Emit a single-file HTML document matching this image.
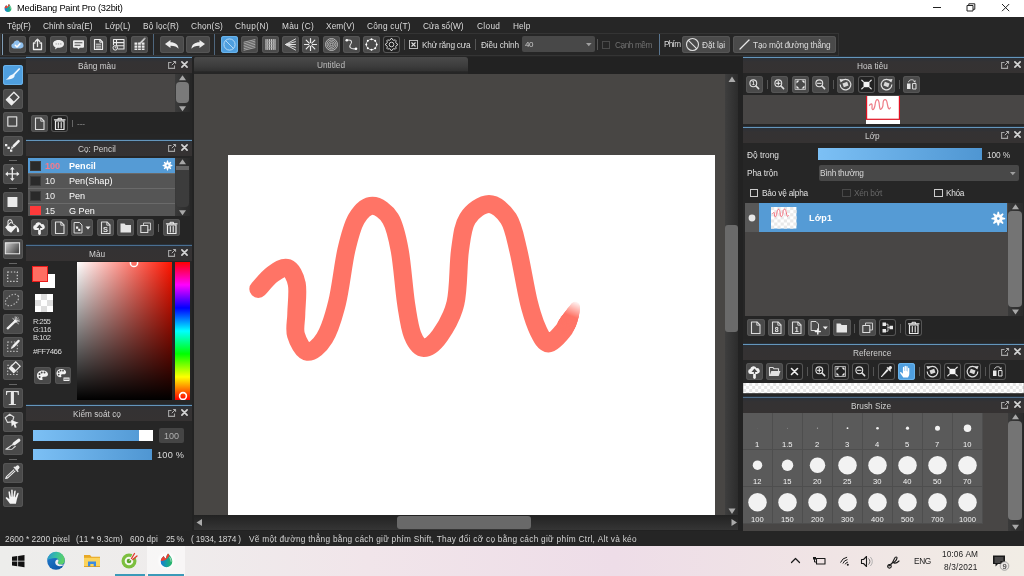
<!DOCTYPE html>
<html><head><meta charset="utf-8"><title>MediBang Paint Pro</title>
<style>
html,body{margin:0;padding:0;}
body{width:1024px;height:576px;position:relative;overflow:hidden;background:#262626;font-family:"Liberation Sans",sans-serif;}
body div,body svg{position:absolute;box-sizing:border-box;}
.t,.g{font-family:"Liberation Sans",sans-serif;will-change:transform;}
svg{overflow:visible;}
</style></head><body>
<div style="left:0px;top:0px;width:1024px;height:17px;background:#ffffff;"></div>
<svg style="left:2.500px;top:3px" width="10" height="10" viewBox="0 0 17 17"><defs><radialGradient id="mgl2" cx=".5" cy=".5" r=".5"><stop offset=".6" stop-color="#fff" stop-opacity=".9"/><stop offset="1" stop-color="#fff" stop-opacity="0"/></radialGradient><linearGradient id="mg2" x1="0" y1="0" x2="1" y2="0"><stop offset="0" stop-color="#1878d8"/><stop offset=".5" stop-color="#16a0a0"/><stop offset="1" stop-color="#2cb860"/></linearGradient></defs><circle cx="8.500" cy="8.500" r="9.500" fill="url(#mgl2)"/><path d="M10 1.500C12.800 4.300 14.300 6.800 14.300 9.500A5.800 5.800 0 0 1 2.700 9.500C2.700 7 4.300 5.200 5.800 4 6.300 5.500 7 6.300 8 6.500 8.200 4.500 8.800 3 10 1.500z" fill="url(#mg2)"/><path d="M10 1.500C8.800 3 8.200 4.500 8 6.500 7 6.300 6.300 5.500 5.800 4 4.300 5.200 3 6.800 2.800 8.800 5.500 9.200 8.800 8.300 11.500 3.300 11 2.600 10.500 2 10 1.500z" fill="#ee4030"/><path d="M11.800 5.500c.9 1.400 1.300 2.600 1.300 3.800" fill="none" stroke="#fff" stroke-opacity=".55" stroke-width="1.100" stroke-linecap="round"/></svg>
<div class="t" style="left:17.3px;top:2.20px;line-height:12px;font-size:9.3px;color:#000;white-space:nowrap;font-kerning:none;letter-spacing:-0.229px;">MediBang Paint Pro (32bit)</div>
<svg style="left:840px;top:0" width="184" height="17" viewBox="0 0 184 17"><path d="M93 7.500h8" stroke="#222" stroke-width="1"/><path d="M127 5.500h6v5.500h-6zM128.800 5.500V3.800h6v5.500h-1.800" fill="none" stroke="#222" stroke-width="1"/><path d="M162 4l7.200 7.200M169.200 4l-7.200 7.200" stroke="#222" stroke-width="1"/></svg>
<div style="left:0px;top:17px;width:1024px;height:16px;background:#262626;"></div>
<div class="t" style="left:7px;top:19.50px;line-height:12px;font-size:8.3px;color:#dcdcdc;white-space:nowrap;font-kerning:none;letter-spacing:-0.233px;">Tệp(F)</div>
<div class="t" style="left:43px;top:19.50px;line-height:12px;font-size:8.3px;color:#dcdcdc;white-space:nowrap;font-kerning:none;letter-spacing:0.010px;">Chỉnh sửa(E)</div>
<div class="t" style="left:105px;top:19.50px;line-height:12px;font-size:8.3px;color:#dcdcdc;white-space:nowrap;font-kerning:none;letter-spacing:0.114px;">Lớp(L)</div>
<div class="t" style="left:142.5px;top:19.50px;line-height:12px;font-size:8.3px;color:#dcdcdc;white-space:nowrap;font-kerning:none;letter-spacing:0.157px;">Bộ lọc(R)</div>
<div class="t" style="left:190.5px;top:19.50px;line-height:12px;font-size:8.3px;color:#dcdcdc;white-space:nowrap;font-kerning:none;letter-spacing:0.156px;">Chọn(S)</div>
<div class="t" style="left:234.5px;top:19.50px;line-height:12px;font-size:8.3px;color:#dcdcdc;white-space:nowrap;font-kerning:none;letter-spacing:0.377px;">Chụp(N)</div>
<div class="t" style="left:281.5px;top:19.50px;line-height:12px;font-size:8.3px;color:#dcdcdc;white-space:nowrap;font-kerning:none;letter-spacing:0.289px;">Màu (C)</div>
<div class="t" style="left:325.5px;top:19.50px;line-height:12px;font-size:8.3px;color:#dcdcdc;white-space:nowrap;font-kerning:none;letter-spacing:0.095px;">Xem(V)</div>
<div class="t" style="left:366.7px;top:19.50px;line-height:12px;font-size:8.3px;color:#dcdcdc;white-space:nowrap;font-kerning:none;letter-spacing:0.229px;">Công cụ(T)</div>
<div class="t" style="left:423px;top:19.50px;line-height:12px;font-size:8.3px;color:#dcdcdc;white-space:nowrap;font-kerning:none;letter-spacing:-0.011px;">Cửa sổ(W)</div>
<div class="t" style="left:476.5px;top:19.50px;line-height:12px;font-size:8.3px;color:#dcdcdc;white-space:nowrap;font-kerning:none;letter-spacing:0.323px;">Cloud</div>
<div class="t" style="left:512.5px;top:19.50px;line-height:12px;font-size:8.3px;color:#dcdcdc;white-space:nowrap;font-kerning:none;letter-spacing:0.107px;">Help</div>
<div style="left:0px;top:33px;width:1024px;height:24px;background:#262626;"></div>
<div style="left:0px;top:33px;width:839px;height:23px;background:transparent;border:1px solid #343434;"></div>
<div style="left:2px;top:34px;width:1px;height:21px;background:#7f9cb5;"></div>
<div style="left:153px;top:34px;width:1px;height:21px;background:#4f677e;"></div>
<div style="left:214px;top:34px;width:1px;height:21px;background:#4f677e;"></div>
<div style="left:659px;top:34px;width:1px;height:21px;background:#5a7690;"></div>
<div style="left:9.0px;top:36px;width:17px;height:17px;background:#4a4a4a;border-radius:3px;box-shadow:inset 0 0 0 1px #555;"></div>
<svg style="left:9.0px;top:36px" width="17" height="17" viewBox="0 0 17 17"><path d="M4.800 12.500a2.600 2.600 0 0 1 -.4 -5.150a3.400 3.400 0 0 1 6.500 -.9a2.900 2.900 0 0 1 1.300 5.700a2 2 0 0 1 -.6 .35z" fill="#8fc0ee" /><path d="M6.300 9.300l1.700 1.700 3-3.300" fill="none" stroke="#ffffff" stroke-width="1.5" stroke-linecap="round" stroke-linejoin="round" /></svg>
<div style="left:29.25px;top:36px;width:17px;height:17px;background:#4a4a4a;border-radius:3px;box-shadow:inset 0 0 0 1px #555;"></div>
<svg style="left:29.25px;top:36px" width="17" height="17" viewBox="0 0 17 17"><path d="M6 7H4.500V13.500H12.500V7H11" fill="none" stroke="#ececec" stroke-width="1.3" stroke-linecap="round" stroke-linejoin="round" /><path d="M8.500 10.500V3.500M6.300 5.500L8.500 3.200 10.700 5.500" fill="none" stroke="#ececec" stroke-width="1.3" stroke-linecap="round" stroke-linejoin="round" /></svg>
<div style="left:49.5px;top:36px;width:17px;height:17px;background:#4a4a4a;border-radius:3px;box-shadow:inset 0 0 0 1px #555;"></div>
<svg style="left:49.5px;top:36px" width="17" height="17" viewBox="0 0 17 17"><path d="M8.500 4C5.200 4 3 5.700 3 7.900c0 1.500 1 2.700 2.500 3.300L5 13.500l2.400 -1.800c.4 0 .7 .1 1.100 .1 3.300 0 5.500 -1.700 5.500 -3.900S11.800 4 8.500 4z" fill="#ececec" /><g fill="#9a9a9a"><circle cx="6.200" cy="7.900" r=".7"/><circle cx="8.500" cy="7.900" r=".7"/><circle cx="10.800" cy="7.900" r=".7"/></g></svg>
<div style="left:69.75px;top:36px;width:17px;height:17px;background:#4a4a4a;border-radius:3px;box-shadow:inset 0 0 0 1px #555;"></div>
<svg style="left:69.75px;top:36px" width="17" height="17" viewBox="0 0 17 17"><path d="M4 4.200h9a1 1 0 0 1 1 1v5.600a1 1 0 0 1 -1 1H9.800L8.500 13.500 7.200 11.800H4a1 1 0 0 1 -1 -1V5.200a1 1 0 0 1 1 -1z" fill="#ececec" /><path d="M5 6.800h7M5 9.200h5" fill="none" stroke="#4a4a4a" stroke-width="1.1" stroke-linecap="round" stroke-linejoin="round" /></svg>
<div style="left:90.0px;top:36px;width:17px;height:17px;background:#4a4a4a;border-radius:3px;box-shadow:inset 0 0 0 1px #555;"></div>
<svg style="left:90.0px;top:36px" width="17" height="17" viewBox="0 0 17 17"><path d="M4.500 3.500H10L12.500 6V13.500H4.500z" fill="none" stroke="#ececec" stroke-width="1.2" stroke-linecap="round" stroke-linejoin="round" /><path d="M9.800 3.700V6.200H12.300" fill="none" stroke="#ececec" stroke-width="1" stroke-linecap="round" stroke-linejoin="round" /><path d="M6.300 8.200h4.400M6.300 10.200h4.400M6.300 12h4.400" fill="none" stroke="#ececec" stroke-width="0.9" stroke-linecap="round" stroke-linejoin="round" /></svg>
<div style="left:110.25px;top:36px;width:17px;height:17px;background:#4a4a4a;border-radius:3px;box-shadow:inset 0 0 0 1px #555;"></div>
<svg style="left:110.25px;top:36px" width="17" height="17" viewBox="0 0 17 17"><path d="M3.500 3.500h10.500v9.500H8.500M3.500 3.500V8.500M3.500 6.600h10.500M6.500 9.800h7.500M6.500 3.500v5" fill="none" stroke="#ececec" stroke-width="1.1" stroke-linecap="round" stroke-linejoin="round" /><circle cx="5.300" cy="11.800" r="2.300" fill="#4a4a4a" stroke="#ececec" stroke-width="1"/><path d="M5.300 10.600v1.300h1" fill="none" stroke="#ececec" stroke-width="0.8" stroke-linecap="round" stroke-linejoin="round" /></svg>
<div style="left:130.5px;top:36px;width:17px;height:17px;background:#4a4a4a;border-radius:3px;box-shadow:inset 0 0 0 1px #555;"></div>
<svg style="left:130.5px;top:36px" width="17" height="17" viewBox="0 0 17 17"><path d="M3.500 6.500h2.800v2.200H3.500zM7.100 6.500h2.800v2.200H7.100zM10.700 6.500h2.800v2.200h-2.800zM3.500 9.500h2.800v2.200H3.500zM7.100 9.500h2.800v2.200H7.100zM10.700 9.500h2.800v2.200h-2.800zM3.500 12.500h2.800v1.500H3.500zM7.100 12.500h2.800v1.500H7.100zM10.700 12.500h2.800v1.500h-2.800z" fill="#ececec" /><path d="M9.500 6.800L13 3.300" fill="none" stroke="#cfcfcf" stroke-width="1.7" stroke-linecap="round" stroke-linejoin="round" /><path d="M13.300 3l.6 -.6" fill="none" stroke="#aaa" stroke-width="1.6" stroke-linecap="round" stroke-linejoin="round" /></svg>
<div style="left:160px;top:36px;width:24px;height:17px;background:#4a4a4a;border-radius:3px;box-shadow:inset 0 0 0 1px #555;"></div>
<svg style="left:160px;top:36px" width="24" height="17" viewBox="0 0 24 17"><path d="M5 8L10.500 4V6.300C15 6.300 18.500 8.500 18.500 12.800 17 10.500 14.500 9.700 10.500 9.700V12z" fill="#ececec" /></svg>
<div style="left:186px;top:36px;width:24px;height:17px;background:#4a4a4a;border-radius:3px;box-shadow:inset 0 0 0 1px #555;"></div>
<svg style="left:186px;top:36px" width="24" height="17" viewBox="0 0 24 17"><path d="M19 8L13.500 4V6.300C9 6.300 5.500 8.500 5.500 12.800 7 10.500 9.500 9.700 13.500 9.700V12z" fill="#ececec" /></svg>
<div style="left:221.0px;top:36px;width:17px;height:17px;background:#4f9fdf;border-radius:3px;box-shadow:inset 0 0 0 1px #6ab3ea;"></div>
<svg style="left:221.0px;top:36px" width="17" height="17" viewBox="0 0 17 17"><circle cx="8.500" cy="8.500" r="5.600" fill="none" stroke="#b4d8f6" stroke-width="1"/><path d="M4.700 4.700l7.600 7.600" fill="none" stroke="#b4d8f6" stroke-width="1" stroke-linecap="round" stroke-linejoin="round" /></svg>
<div style="left:241.3px;top:36px;width:17px;height:17px;background:#4a4a4a;border-radius:3px;box-shadow:inset 0 0 0 1px #555;"></div>
<svg style="left:241.3px;top:36px" width="17" height="17" viewBox="0 0 17 17"><path d="M3 6.200L14 3.600M3 7.800L14 5.200M3 9.400L14 6.800M3 11L14 8.400M3 12.600L14 10M3 14.200L14 11.600" fill="none" stroke="#bdbdbd" stroke-width="0.8" stroke-linecap="round" stroke-linejoin="round" /></svg>
<div style="left:261.6px;top:36px;width:17px;height:17px;background:#4a4a4a;border-radius:3px;box-shadow:inset 0 0 0 1px #555;"></div>
<svg style="left:261.6px;top:36px" width="17" height="17" viewBox="0 0 17 17"><path d="M4 3.500v10M5.800 3.500v10M7.600 3.500v10M9.400 3.500v10M11.200 3.500v10M13 3.500v10" fill="none" stroke="#d8d8d8" stroke-width="1.0" stroke-linecap="round" stroke-linejoin="round" /><path d="M3.500 5.500h10M3.500 8.500h10M3.500 11.500h10" fill="none" stroke="#9a9a9a" stroke-width="0.6" stroke-linecap="round" stroke-linejoin="round" /></svg>
<div style="left:281.9px;top:36px;width:17px;height:17px;background:#4a4a4a;border-radius:3px;box-shadow:inset 0 0 0 1px #555;"></div>
<svg style="left:281.9px;top:36px" width="17" height="17" viewBox="0 0 17 17"><path d="M3.500 8.500L13.500 3M3.500 8.500L13.500 14M3.500 8.500L13.500 5.700M3.500 8.500L13.500 11.300M3.500 8.500H13.500" fill="none" stroke="#e0e0e0" stroke-width="1.0" stroke-linecap="round" stroke-linejoin="round" /></svg>
<div style="left:302.2px;top:36px;width:17px;height:17px;background:#4a4a4a;border-radius:3px;box-shadow:inset 0 0 0 1px #555;"></div>
<svg style="left:302.2px;top:36px" width="17" height="17" viewBox="0 0 17 17"><path d="M8.500 2.500v12M2.500 8.500h12M4.200 4.200l8.600 8.600M12.800 4.200l-8.600 8.600" fill="none" stroke="#ececec" stroke-width="1.2" stroke-linecap="round" stroke-linejoin="round" /><circle cx="8.500" cy="8.500" r="1.400" fill="#4a4a4a"/></svg>
<div style="left:322.5px;top:36px;width:17px;height:17px;background:#4a4a4a;border-radius:3px;box-shadow:inset 0 0 0 1px #555;"></div>
<svg style="left:322.5px;top:36px" width="17" height="17" viewBox="0 0 17 17"><circle cx="8.500" cy="8.500" r="1.3" fill="none" stroke="#cfcfcf" stroke-width="0.8"/><circle cx="8.500" cy="8.500" r="2.9" fill="none" stroke="#cfcfcf" stroke-width="0.8"/><circle cx="8.500" cy="8.500" r="4.5" fill="none" stroke="#cfcfcf" stroke-width="0.8"/><circle cx="8.500" cy="8.500" r="6" fill="none" stroke="#cfcfcf" stroke-width="0.8"/></svg>
<div style="left:342.8px;top:36px;width:17px;height:17px;background:#4a4a4a;border-radius:3px;box-shadow:inset 0 0 0 1px #555;"></div>
<svg style="left:342.8px;top:36px" width="17" height="17" viewBox="0 0 17 17"><path d="M3.800 4.200C9 3.500 9.500 6 7.500 8.500 5.500 11 8 13.500 13 12.700" fill="none" stroke="#dcdcdc" stroke-width="1.1" stroke-linecap="round" stroke-linejoin="round" /><circle cx="3.800" cy="4.200" r="1.300" fill="#fff"/><circle cx="13" cy="12.700" r="1.300" fill="#fff"/></svg>
<div style="left:363.1px;top:36px;width:17px;height:17px;background:#4a4a4a;border-radius:3px;box-shadow:inset 0 0 0 1px #555;"></div>
<svg style="left:363.1px;top:36px" width="17" height="17" viewBox="0 0 17 17"><circle cx="8.500" cy="8.500" r="5.200" fill="none" stroke="#d4d4d4" stroke-width="0.900"/><circle cx="13.70" cy="8.50" r="1" fill="#fff"/><circle cx="12.18" cy="12.18" r="1" fill="#fff"/><circle cx="8.50" cy="13.70" r="1" fill="#fff"/><circle cx="4.82" cy="12.18" r="1" fill="#fff"/><circle cx="3.30" cy="8.50" r="1" fill="#fff"/><circle cx="4.82" cy="4.82" r="1" fill="#fff"/><circle cx="8.50" cy="3.30" r="1" fill="#fff"/><circle cx="12.18" cy="4.82" r="1" fill="#fff"/></svg>
<div style="left:383.4px;top:36px;width:17px;height:17px;background:#222222;border-radius:3px;box-shadow:inset 0 0 0 1px #555;"></div>
<svg style="left:383.4px;top:36px" width="17" height="17" viewBox="0 0 17 17"><path d="M14.47 7.91L14.47 9.09L13.00 9.86L12.65 10.72L13.14 12.31L12.31 13.14L10.72 12.65L9.86 13.00L9.09 14.47L7.91 14.47L7.14 13.00L6.28 12.65L4.69 13.14L3.86 12.31L4.35 10.72L4.00 9.86L2.53 9.09L2.53 7.91L4.00 7.14L4.35 6.28L3.86 4.69L4.69 3.86L6.28 4.35L7.14 4.00L7.91 2.53L9.09 2.53L9.86 4.00L10.72 4.35L12.31 3.86L13.14 4.69L12.65 6.28L13.00 7.14z" fill="none" stroke="#d0d0d0" stroke-width="1" stroke-linejoin="round"/><circle cx="8.500" cy="8.500" r="2.300" fill="none" stroke="#d0d0d0" stroke-width="1"/></svg>
<div style="left:404px;top:39px;width:1px;height:11px;background:#555;"></div>
<div style="left:409px;top:40px;width:9px;height:9px;background:#262626;border:1px solid #bbb;"></div>
<svg style="left:409px;top:40px" width="9" height="9"><path d="M2.5 2.5l4 4M6.5 2.5l-4 4" stroke="#ddd" stroke-width="1.1"/></svg>
<div class="t" style="left:421.5px;top:39.00px;line-height:12px;font-size:8.3px;color:#dcdcdc;white-space:nowrap;font-kerning:none;letter-spacing:-0.230px;">Khử răng cưa</div>
<div style="left:475px;top:39px;width:1px;height:11px;background:#555;"></div>
<div class="t" style="left:481px;top:39.00px;line-height:12px;font-size:8.3px;color:#dcdcdc;white-space:nowrap;font-kerning:none;letter-spacing:-0.122px;">Điều chỉnh</div>
<div style="left:522px;top:36px;width:73px;height:16px;background:#484848;border-radius:2px;"></div>
<div class="t" style="left:525px;top:38.50px;line-height:12px;font-size:8.0px;color:#ccc;white-space:nowrap;font-kerning:none;letter-spacing:-0.450px;">40</div>
<svg style="left:585.500px;top:42.500px" width="6" height="4"><path d="M0 0h5.600l-2.800 3.200z" fill="#a0a0a0"/></svg>
<div style="left:597px;top:39px;width:1px;height:11px;background:#555;"></div>
<div style="left:602px;top:41px;width:8px;height:8px;background:transparent;border:1px solid #4a4a4a;"></div>
<div class="t" style="left:615px;top:39.00px;line-height:12px;font-size:8.3px;color:#707070;white-space:nowrap;font-kerning:none;letter-spacing:-0.449px;">Cạnh mềm</div>
<div class="t" style="left:663.7px;top:39.00px;line-height:12px;font-size:8.2px;color:#dcdcdc;white-space:nowrap;font-kerning:none;letter-spacing:-0.710px;">Phím</div>
<div style="left:682px;top:36px;width:48px;height:17px;background:#4a4a4a;border-radius:3px;box-shadow:inset 0 0 0 1px #555;"></div>
<svg style="left:685px;top:37px" width="15" height="15" viewBox="0 0 15 15"><circle cx="7.500" cy="7.500" r="6" fill="none" stroke="#e0e0e0" stroke-width="1.1"/><path d="M3.400 3.400l8.200 8.200" fill="none" stroke="#e0e0e0" stroke-width="1.1" stroke-linecap="round" stroke-linejoin="round" /></svg>
<div class="t" style="left:701.5px;top:39.00px;line-height:12px;font-size:8.3px;color:#dcdcdc;white-space:nowrap;font-kerning:none;letter-spacing:-0.075px;">Đặt lại</div>
<div style="left:733px;top:36px;width:103px;height:17px;background:#4a4a4a;border-radius:3px;box-shadow:inset 0 0 0 1px #555;"></div>
<svg style="left:738px;top:38px" width="13" height="13" viewBox="0 0 13 13"><path d="M2 11L11 2" fill="none" stroke="#e8e8e8" stroke-width="1.3" stroke-linecap="round" stroke-linejoin="round" /></svg>
<div class="t" style="left:752.5px;top:39.00px;line-height:12px;font-size:8.3px;color:#dcdcdc;white-space:nowrap;font-kerning:none;letter-spacing:-0.167px;">Tạo một đường thẳng</div>
<div style="left:0px;top:57px;width:26px;height:474px;background:#262626;"></div>
<div style="left:0px;top:57px;width:26px;height:2px;background:#35424f;"></div>
<div style="left:25.5px;top:59px;width:1px;height:471px;background:#303030;"></div>
<div style="left:3.2px;top:65px;width:19.5px;height:20px;background:#4f9fdf;border-radius:3px;box-shadow:inset 0 0 0 1px #6ab3ea;"></div>
<svg style="left:3.2px;top:65px" width="19.5" height="20" viewBox="0 0 19.5 20"><path d="M16.200 4L10.300 10.100" fill="none" stroke="#eef7ff" stroke-width="1.7" stroke-linecap="round" stroke-linejoin="round" /><path d="M10.700 9.500L11.700 10.600C11.500 12.600 9.600 14 6.900 14.300 5.500 14.500 4 14.500 2.800 14.700 4.800 13.600 5.500 12.700 6.100 11.600 6.900 10.200 8.900 9.100 10.700 9.500z" fill="#eef7ff" /></svg>
<div style="left:3.2px;top:88.5px;width:19.5px;height:20px;background:#4a4a4a;border-radius:3px;box-shadow:inset 0 0 0 1px #555;"></div>
<svg style="left:3.2px;top:88.5px" width="19.5" height="20" viewBox="0 0 19.5 20"><g transform="translate(9.700,9.500) rotate(-45)"><path d="M-5.300 -3.600h10.600v7.200h-10.600z" fill="none" stroke="#ececec" stroke-width="1.3" stroke-linecap="round" stroke-linejoin="round" /><path d="M-5.300 -3.600h4v7.200h-4z" fill="#ececec" /></g></svg>
<div style="left:3.2px;top:112px;width:19.5px;height:20px;background:#4a4a4a;border-radius:3px;box-shadow:inset 0 0 0 1px #555;"></div>
<svg style="left:3.2px;top:112px" width="19.5" height="20" viewBox="0 0 19.5 20"><path d="M4.800 4.900h8.900v9.200H4.800z" fill="none" stroke="#d4d4d4" stroke-width="1.3" stroke-linecap="round" stroke-linejoin="round" /></svg>
<div style="left:3.2px;top:135.5px;width:19.5px;height:20px;background:#4a4a4a;border-radius:3px;box-shadow:inset 0 0 0 1px #555;"></div>
<svg style="left:3.2px;top:135.5px" width="19.5" height="20" viewBox="0 0 19.5 20"><path d="M15.600 5.200L10.800 10" fill="none" stroke="#efefef" stroke-width="2.5" stroke-linecap="round" stroke-linejoin="round" /><path d="M8.800 10l2 2 -2.900 .9z" fill="#efefef" /><path d="M2 8h2.300v2.300H2zM4.500 10.700h2.300v2.300H4.500zM7 13.400h2.300v2.300H7z" fill="#efefef" /></svg>
<div style="left:3.2px;top:163.5px;width:19.5px;height:20px;background:#4a4a4a;border-radius:3px;box-shadow:inset 0 0 0 1px #555;"></div>
<svg style="left:3.2px;top:163.5px" width="19.5" height="20" viewBox="0 0 19.5 20"><path d="M9.300 4.500v11M3.800 9.900h11" fill="none" stroke="#ececec" stroke-width="1.3" stroke-linecap="round" stroke-linejoin="round" /><path d="M9.300 2.800l2.300 2.700H7zM9.300 17l2.300 -2.700H7zM2.200 9.900l2.700 -2.300v4.600zM16.400 9.900l-2.700 -2.300v4.600z" fill="#ececec" /></svg>
<div style="left:3.2px;top:192px;width:19.5px;height:20px;background:#4a4a4a;border-radius:3px;box-shadow:inset 0 0 0 1px #555;"></div>
<svg style="left:3.2px;top:192px" width="19.5" height="20" viewBox="0 0 19.5 20"><path d="M4.500 5h9.900v10H4.500z" fill="#ebebeb" /></svg>
<div style="left:3.2px;top:215.5px;width:19.5px;height:20px;background:#4a4a4a;border-radius:3px;box-shadow:inset 0 0 0 1px #555;"></div>
<svg style="left:3.2px;top:215.5px" width="19.5" height="20" viewBox="0 0 19.5 20"><path d="M2.200 11.300L7.600 5.800 14 10.300 8.100 16.700 4.900 14.800z" fill="#f2f2f2" /><path d="M5 9V5.500a2 2 0 0 1 3.800 -.6L9.500 7" fill="none" stroke="#e8e8e8" stroke-width="1.1" stroke-linecap="round" stroke-linejoin="round" /><path d="M13.800 10c1.600 1.400 2.600 3.600 2.400 5.600a1.200 1.200 0 0 1 -2.300 -.3c.2 -1.800 0 -3.600 -.9 -4.600z" fill="#f2f2f2" /><path d="M5.500 9.200L8 6.800 11.800 9.400 9 10.400z" fill="#4a4a4a" /></svg>
<div style="left:3.2px;top:239px;width:19.5px;height:20px;background:#4a4a4a;border-radius:3px;box-shadow:inset 0 0 0 1px #555;"></div>
<svg style="left:3.2px;top:239px" width="19.5" height="20" viewBox="0 0 19.5 20"><defs><linearGradient id="tg" x1="0" x2="1" y1="0" y2="0.600"><stop offset="0" stop-color="#cfcfcf"/><stop offset="1" stop-color="#4c4c4c"/></linearGradient></defs><rect x="2.300" y="3.800" width="14.300" height="11" fill="url(#tg)" stroke="#ececec" stroke-width="1"/></svg>
<div style="left:3.2px;top:267px;width:19.5px;height:20px;background:#4a4a4a;border-radius:3px;box-shadow:inset 0 0 0 1px #555;"></div>
<svg style="left:3.2px;top:267px" width="19.5" height="20" viewBox="0 0 19.5 20"><rect x="4.700" y="5" width="9.600" height="9.400" fill="none" stroke="#cdcdcd" stroke-width="1.200" stroke-dasharray="1.400 1.700"/></svg>
<div style="left:3.2px;top:290px;width:19.5px;height:20px;background:#4a4a4a;border-radius:3px;box-shadow:inset 0 0 0 1px #555;"></div>
<svg style="left:3.2px;top:290px" width="19.5" height="20" viewBox="0 0 19.5 20"><ellipse cx="9" cy="10" rx="7.400" ry="4.700" transform="rotate(-35 9 10)" fill="none" stroke="#b4b4b4" stroke-width="1.200" stroke-dasharray="1.500 1.600"/></svg>
<div style="left:3.2px;top:313.5px;width:19.5px;height:20px;background:#4a4a4a;border-radius:3px;box-shadow:inset 0 0 0 1px #555;"></div>
<svg style="left:3.2px;top:313.5px" width="19.5" height="20" viewBox="0 0 19.5 20"><path d="M4.700 14.300L11.200 8.200" fill="none" stroke="#f0f0f0" stroke-width="2.3" stroke-linecap="round" stroke-linejoin="round" /><path d="M12.200 7.200L15.500 4M12.200 7.200V2.800M12.200 7.200H16.500M12.200 7.200L9.800 4.200M12.200 7.200l3.300 2.600M12.200 7.200L13.800 3M12.200 7.200l4 -1.200" fill="none" stroke="#dcdcdc" stroke-width="0.8" stroke-linecap="round" stroke-linejoin="round" /><circle cx="12.200" cy="7.200" r="1.500" fill="#f4f4f4"/></svg>
<div style="left:3.2px;top:336.5px;width:19.5px;height:20px;background:#4a4a4a;border-radius:3px;box-shadow:inset 0 0 0 1px #555;"></div>
<svg style="left:3.2px;top:336.5px" width="19.5" height="20" viewBox="0 0 19.5 20"><rect x="4.700" y="5" width="9.600" height="9.400" fill="none" stroke="#bdbdbd" stroke-width="1.100" stroke-dasharray="1.400 1.700"/><path d="M15.500 4L10.600 9.200" fill="none" stroke="#f0f0f0" stroke-width="2.5" stroke-linecap="round" stroke-linejoin="round" /><path d="M8.900 9l1.900 1.800 -3 1.200z" fill="#f0f0f0" /></svg>
<div style="left:3.2px;top:360px;width:19.5px;height:20px;background:#4a4a4a;border-radius:3px;box-shadow:inset 0 0 0 1px #555;"></div>
<svg style="left:3.2px;top:360px" width="19.5" height="20" viewBox="0 0 19.5 20"><rect x="4.700" y="5.300" width="9.600" height="9.200" fill="none" stroke="#bdbdbd" stroke-width="1.100" stroke-dasharray="1.400 1.700"/><g transform="translate(11.700,7.300) rotate(-45)"><path d="M-4.600 -3.100h9.200v6.200h-9.200z" fill="#4a4a4a" stroke="#ececec" stroke-width="1.200"/><path d="M-4.600 -3.100h3.400v6.200h-3.400z" fill="#ececec"/></g></svg>
<div style="left:3.2px;top:388px;width:19.5px;height:20px;background:#4a4a4a;border-radius:3px;box-shadow:inset 0 0 0 1px #555;"></div>
<svg class="g" style="left:3.2px;top:388px" width="19.5" height="20" viewBox="0 0 19.5 20"><text x="9.500" y="16.700" text-anchor="middle" font-family="Liberation Serif,serif" font-weight="bold" font-size="20" fill="#e8e8e8">T</text></svg>
<div style="left:3.2px;top:411.5px;width:19.5px;height:20px;background:#4a4a4a;border-radius:3px;box-shadow:inset 0 0 0 1px #555;"></div>
<svg style="left:3.2px;top:411.5px" width="19.5" height="20" viewBox="0 0 19.5 20"><path d="M6.700 2.200L10.800 4.900 9.400 9.900 4.500 10.400 2.200 5.800z" fill="none" stroke="#dcdcdc" stroke-width="1.2" stroke-linecap="round" stroke-linejoin="round" /><path d="M8.100 8.100L15.600 10.700 12.500 11.900 13.600 15.600 11.700 15.800 10.600 12.600 8.600 14.600z" fill="#f0f0f0" /></svg>
<div style="left:3.2px;top:435px;width:19.5px;height:20px;background:#4a4a4a;border-radius:3px;box-shadow:inset 0 0 0 1px #555;"></div>
<svg style="left:3.2px;top:435px" width="19.5" height="20" viewBox="0 0 19.5 20"><path d="M15.800 5.200L11.200 8.700" fill="none" stroke="#f0f0f0" stroke-width="3.2" stroke-linecap="round" stroke-linejoin="round" /><path d="M10.300 9.300L2.900 14.200 8.700 14.300 12.300 11.400" fill="none" stroke="#e4e4e4" stroke-width="1.1" stroke-linecap="round" stroke-linejoin="round" /><path d="M8.500 10.600l1.800 2.400 -3.500 1z" fill="#3c3c3c" /></svg>
<div style="left:3.2px;top:463px;width:19.5px;height:20px;background:#4a4a4a;border-radius:3px;box-shadow:inset 0 0 0 1px #555;"></div>
<svg style="left:3.2px;top:463px" width="19.5" height="20" viewBox="0 0 19.5 20"><path d="M10.800 6.900L3.500 13.600 2.700 15.500 4.700 14.900 12 8.100" fill="none" stroke="#ececec" stroke-width="1.1" stroke-linecap="round" stroke-linejoin="round" /><path d="M10.400 4.300L14.700 9.200 15.700 8.300 14.600 7 15.900 5.800A1.900 1.900 0 0 0 13.300 3L12 4.100 11.300 3.400z" fill="#ececec" /></svg>
<div style="left:3.2px;top:486.5px;width:19.5px;height:20px;background:#4a4a4a;border-radius:3px;box-shadow:inset 0 0 0 1px #555;"></div>
<svg style="left:3.2px;top:486.5px" width="19.5" height="20" viewBox="0 0 19.5 20"><path d="M7 16.700C5.600 14.800 4.300 13 2.900 11.400 2.200 10.500 3.300 9.700 4.200 10.400L6.400 12.200 5.500 5.200C5.400 4.100 6.700 3.900 6.900 5L7.900 9.800H8.300L8.200 3.300C8.200 2.100 9.700 2.100 9.700 3.300L9.900 9.700H10.300L11.300 4.100C11.500 3 12.900 3.200 12.700 4.400L12 10.200H12.400L14.200 6.400C14.700 5.400 15.900 5.900 15.500 7L13.900 12.300C13.500 14 13.200 15.500 12.900 16.700z" fill="#f4f4f4" /></svg>
<div style="left:9px;top:159.5px;width:8px;height:1px;background:#666;"></div>
<div style="left:9px;top:187.5px;width:8px;height:1px;background:#666;"></div>
<div style="left:9px;top:262.5px;width:8px;height:1px;background:#666;"></div>
<div style="left:9px;top:383.5px;width:8px;height:1px;background:#666;"></div>
<div style="left:9px;top:459px;width:8px;height:1px;background:#666;"></div>
<div style="left:26px;top:57px;width:166.5px;height:83px;background:#262626;"></div>
<div style="left:26px;top:58px;width:166.5px;height:15px;background:linear-gradient(#2c3138 0,#343233 4px,#353232 100%);"></div>
<div style="left:26px;top:56px;width:166.5px;height:1px;background:#28323c;"></div>
<div style="left:26px;top:57px;width:166.5px;height:1px;background:#6496bc;"></div>
<div class="t" style="left:78.4318359375px;top:59.50px;line-height:12px;font-size:8.3px;color:#d0d0d0;white-space:nowrap;font-kerning:none;">Bảng màu</div>
<svg style="left:180.9px;top:61.099999999999994px" width="7" height="7"><path d="M.9 .9l5.200 5.200M6.100 .9l-5.200 5.200" stroke="#d4d4d4" stroke-width="1.700" stroke-linecap="round"/></svg>
<svg style="left:167.9px;top:60.599999999999994px" width="9" height="9"><path d="M3.500 1.500H.6V7.400H6.500V4.500" fill="none" stroke="#a4a4a4" stroke-width="1.100"/><path d="M3.800 4.200L7.500 .5M5.200 .5h2.400V2.800" fill="none" stroke="#b4b4b4" stroke-width="1"/></svg>
<div style="left:28px;top:73.5px;width:147px;height:38.5px;background:#484645;"></div>
<div style="left:175px;top:73.5px;width:15px;height:38.5px;background:linear-gradient(90deg,#3a3a3a,#2a2a2a);"></div>
<svg style="left:175px;top:73.5px" width="15" height="38.5"><path d="M4.0 6.2h7l-3.500 -5z" fill="#a8a8a8"/><path d="M4.0 32.3h7l-3.500 5z" fill="#a8a8a8"/></svg>
<div style="left:175.5px;top:82.2px;width:13.5px;height:21.299999999999997px;background:#7a7a7a;border-radius:4px;"></div>
<div style="left:28px;top:112px;width:164px;height:22px;background:#252525;"></div>
<div style="left:31px;top:115px;width:17px;height:17px;background:#4a4a4a;border-radius:3px;box-shadow:inset 0 0 0 1px #555;"></div>
<svg style="left:31px;top:115px" width="17" height="17" viewBox="0 0 17 17"><path d="M4.500 3h5.500L13 6v8.500H4.500z" fill="none" stroke="#dcdcdc" stroke-width="1.1" stroke-linecap="round" stroke-linejoin="round" /><path d="M9.800 3.200V6.200H12.800" fill="none" stroke="#dcdcdc" stroke-width="0.9" stroke-linecap="round" stroke-linejoin="round" /></svg>
<div style="left:51px;top:115px;width:17px;height:17px;background:#222222;border-radius:3px;box-shadow:inset 0 0 0 1px #555;"></div>
<svg style="left:51px;top:115px" width="17" height="17" viewBox="0 0 17 17"><path d="M4.500 6h8.500v8.500H4.500z" fill="none" stroke="#ececec" stroke-width="1.2" stroke-linecap="round" stroke-linejoin="round" /><path d="M7.300 7.500v5.500M10.200 7.500v5.500" fill="none" stroke="#ececec" stroke-width="1.1" stroke-linecap="round" stroke-linejoin="round" /><path d="M3.500 4.800h10.500" fill="none" stroke="#ececec" stroke-width="1.3" stroke-linecap="round" stroke-linejoin="round" /><path d="M7 4.500V3.300h3.500v1.200" fill="none" stroke="#ececec" stroke-width="1" stroke-linecap="round" stroke-linejoin="round" /></svg>
<div style="left:72px;top:120px;width:1px;height:7px;background:#666;"></div>
<div class="t" style="left:77px;top:117.50px;line-height:12px;font-size:8.3px;color:#888;white-space:nowrap;font-kerning:none;letter-spacing:-0.097px;">---</div>
<div style="left:26px;top:140px;width:166.5px;height:105px;background:#262626;"></div>
<div style="left:26px;top:141px;width:166.5px;height:15px;background:linear-gradient(#2c3138 0,#343233 4px,#353232 100%);"></div>
<div style="left:26px;top:139px;width:166.5px;height:1px;background:#28323c;"></div>
<div style="left:26px;top:140px;width:166.5px;height:1px;background:#6496bc;"></div>
<div class="t" style="left:78.43588867187499px;top:142.50px;line-height:12px;font-size:8.3px;color:#d0d0d0;white-space:nowrap;font-kerning:none;">Cọ: Pencil</div>
<svg style="left:180.9px;top:144.1px" width="7" height="7"><path d="M.9 .9l5.200 5.200M6.100 .9l-5.200 5.200" stroke="#d4d4d4" stroke-width="1.700" stroke-linecap="round"/></svg>
<svg style="left:167.9px;top:143.6px" width="9" height="9"><path d="M3.500 1.500H.6V7.400H6.500V4.500" fill="none" stroke="#a4a4a4" stroke-width="1.100"/><path d="M3.800 4.200L7.500 .5M5.200 .5h2.400V2.800" fill="none" stroke="#b4b4b4" stroke-width="1"/></svg>
<div style="left:28px;top:157.5px;width:147px;height:58.5px;background:#555;"></div>
<div style="left:28px;top:157.5px;width:147px;height:15px;background:#559bd5;"></div>
<div style="left:28px;top:172.5px;width:147px;height:1px;background:#6a6a6a;"></div>
<div style="left:28px;top:187.5px;width:147px;height:1px;background:#6a6a6a;"></div>
<div style="left:28px;top:202.5px;width:147px;height:1px;background:#6a6a6a;"></div>
<div style="left:30px;top:160.5px;width:10.5px;height:10px;background:#2a2a2a;border:1px solid #3c3c3c;"></div>
<div class="t" style="left:44.5px;top:159.50px;line-height:12px;font-size:9.1px;color:#f47a8c;white-space:nowrap;font-kerning:none;font-weight:bold;">100</div>
<div class="t" style="left:68.5px;top:159.50px;line-height:12px;font-size:9.1px;color:#ffffff;white-space:nowrap;font-kerning:none;font-weight:bold;">Pencil</div>
<div style="left:30px;top:175.5px;width:10.5px;height:10px;background:#2a2a2a;border:1px solid #3c3c3c;"></div>
<div class="t" style="left:44.5px;top:174.50px;line-height:12px;font-size:9.1px;color:#f0f0f0;white-space:nowrap;font-kerning:none;">10</div>
<div class="t" style="left:68.5px;top:174.50px;line-height:12px;font-size:9.1px;color:#ffffff;white-space:nowrap;font-kerning:none;">Pen(Shap)</div>
<div style="left:30px;top:190.5px;width:10.5px;height:10px;background:#2a2a2a;border:1px solid #3c3c3c;"></div>
<div class="t" style="left:44.5px;top:189.50px;line-height:12px;font-size:9.1px;color:#f0f0f0;white-space:nowrap;font-kerning:none;">10</div>
<div class="t" style="left:68.5px;top:189.50px;line-height:12px;font-size:9.1px;color:#ffffff;white-space:nowrap;font-kerning:none;">Pen</div>
<div style="left:30px;top:205.5px;width:10.5px;height:9px;background:#ff3a3a;"></div>
<div class="t" style="left:44.5px;top:204.50px;line-height:12px;font-size:9.1px;color:#f0f0f0;white-space:nowrap;font-kerning:none;">15</div>
<div class="t" style="left:68.5px;top:204.50px;line-height:12px;font-size:9.1px;color:#ffffff;white-space:nowrap;font-kerning:none;">G Pen</div>
<svg style="left:161.700px;top:160.300px" width="11" height="11"><path d="M10.38 5.02L10.38 5.98L8.56 6.43L8.32 7.01L9.29 8.61L8.61 9.29L7.01 8.32L6.43 8.56L5.98 10.38L5.02 10.38L4.57 8.56L3.99 8.32L2.39 9.29L1.71 8.61L2.68 7.01L2.44 6.43L0.62 5.98L0.62 5.02L2.44 4.57L2.68 3.99L1.71 2.39L2.39 1.71L3.99 2.68L4.57 2.44L5.02 0.62L5.98 0.62L6.43 2.44L7.01 2.68L8.61 1.71L9.29 2.39L8.32 3.99L8.56 4.57z" fill="#fff"/><circle cx="5.5" cy="5.5" r="1" fill="#559bd5"/></svg>
<div style="left:175px;top:157.5px;width:15px;height:58.5px;background:linear-gradient(90deg,#3a3a3a,#2a2a2a);"></div>
<svg style="left:175px;top:157.5px" width="15" height="58.5"><path d="M4.0 6.2h7l-3.500 -5z" fill="#a8a8a8"/><path d="M4.0 52.3h7l-3.500 5z" fill="#a8a8a8"/></svg>
<div style="left:175.5px;top:166px;width:13.5px;height:41px;background:#3c3c3c;border-radius:4px;"></div>
<div style="left:176px;top:166px;width:13px;height:4px;background:#666;"></div>
<div style="left:28px;top:216px;width:164px;height:24px;background:#252525;"></div>
<div style="left:31px;top:219px;width:17px;height:17px;background:#4a4a4a;border-radius:3px;box-shadow:inset 0 0 0 1px #555;"></div>
<svg style="left:31px;top:219px" width="17" height="17" viewBox="0 0 17 17"><path d="M4.500 11a2.500 2.500 0 0 1 -.3 -4.950a3.300 3.300 0 0 1 6.300 -.9a2.800 2.800 0 0 1 1.400 5.400a2 2 0 0 1 -.9 .45z" fill="#f0f0f0" /><path d="M8.500 14.500V8.500" fill="none" stroke="#f0f0f0" stroke-width="2.4" stroke-linecap="round" stroke-linejoin="round" /><path d="M8.500 14V8" fill="none" stroke="#4a4a4a" stroke-width="1.2" stroke-linecap="round" stroke-linejoin="round" /><path d="M8.500 5.500l3 3.500h-6z" fill="#4a4a4a" /><path d="M8.500 14.600v-2.800" fill="none" stroke="#f0f0f0" stroke-width="2.2" stroke-linecap="round" stroke-linejoin="round" /></svg>
<div style="left:51px;top:219px;width:17px;height:17px;background:#4a4a4a;border-radius:3px;box-shadow:inset 0 0 0 1px #555;"></div>
<svg style="left:51px;top:219px" width="17" height="17" viewBox="0 0 17 17"><path d="M4.500 3h5.500L13 6v8.500H4.500z" fill="none" stroke="#dcdcdc" stroke-width="1.1" stroke-linecap="round" stroke-linejoin="round" /><path d="M9.800 3.200V6.200H12.800" fill="none" stroke="#dcdcdc" stroke-width="0.9" stroke-linecap="round" stroke-linejoin="round" /></svg>
<div style="left:71px;top:219px;width:22px;height:17px;background:#4a4a4a;border-radius:3px;box-shadow:inset 0 0 0 1px #555;"></div>
<svg style="left:71px;top:219px" width="22" height="17" viewBox="0 0 22 17"><path d="M3.500 3.500h5L11 6v8H3.500z" fill="none" stroke="#d8d8d8" stroke-width="1" stroke-linecap="round" stroke-linejoin="round" /><path d="M5 7.500h2.200v2.200H5zM7.200 9.700h2.200v2.200H7.200z" fill="#f0f0f0" /><path d="M14.500 7.500h5l-2.500 3z" fill="#f0f0f0" /></svg>
<div style="left:97px;top:219px;width:17px;height:17px;background:#4a4a4a;border-radius:3px;box-shadow:inset 0 0 0 1px #555;"></div>
<svg class="g" style="left:97px;top:219px" width="17" height="17" viewBox="0 0 17 17"><path d="M4.500 3h5.500L13 6v8.500H4.500z" fill="none" stroke="#dcdcdc" stroke-width="1.1" stroke-linecap="round" stroke-linejoin="round" /><path d="M9.800 3.200V6.200H12.800" fill="none" stroke="#dcdcdc" stroke-width="0.9" stroke-linecap="round" stroke-linejoin="round" /><text x="8.600" y="13.200" text-anchor="middle" font-family="Liberation Sans,sans-serif" font-weight="bold" font-size="7.500" fill="#e8e8e8">S</text></svg>
<div style="left:117px;top:219px;width:17px;height:17px;background:#4a4a4a;border-radius:3px;box-shadow:inset 0 0 0 1px #555;"></div>
<svg style="left:117px;top:219px" width="17" height="17" viewBox="0 0 17 17"><path d="M3.500 4.500h4l1.200 1.500H14v7.500H3.500z" fill="#e6e6e6" /></svg>
<div style="left:137px;top:219px;width:17px;height:17px;background:#4a4a4a;border-radius:3px;box-shadow:inset 0 0 0 1px #555;"></div>
<svg style="left:137px;top:219px" width="17" height="17" viewBox="0 0 17 17"><path d="M6.500 6.500V4h7v7H11" fill="none" stroke="#c8c8c8" stroke-width="1" stroke-linecap="round" stroke-linejoin="round" /><path d="M3.800 6.500h7v7h-7z" fill="none" stroke="#dcdcdc" stroke-width="1.1" stroke-linecap="round" stroke-linejoin="round" /></svg>
<div style="left:162.5px;top:219px;width:17px;height:17px;background:#4a4a4a;border-radius:3px;box-shadow:inset 0 0 0 1px #555;"></div>
<svg style="left:162.5px;top:219px" width="17" height="17" viewBox="0 0 17 17"><path d="M4.500 6h8.500v8.500H4.500z" fill="none" stroke="#ececec" stroke-width="1.2" stroke-linecap="round" stroke-linejoin="round" /><path d="M7.300 7.500v5.500M10.200 7.500v5.500" fill="none" stroke="#ececec" stroke-width="1.1" stroke-linecap="round" stroke-linejoin="round" /><path d="M3.500 4.800h10.500" fill="none" stroke="#ececec" stroke-width="1.3" stroke-linecap="round" stroke-linejoin="round" /><path d="M7 4.500V3.300h3.500v1.200" fill="none" stroke="#ececec" stroke-width="1" stroke-linecap="round" stroke-linejoin="round" /></svg>
<div style="left:158px;top:224px;width:1px;height:8px;background:#666;"></div>
<div style="left:26px;top:245px;width:166.5px;height:160px;background:#262626;"></div>
<div style="left:26px;top:246px;width:166.5px;height:15px;background:linear-gradient(#2c3138 0,#343233 4px,#353232 100%);"></div>
<div style="left:26px;top:244px;width:166.5px;height:1px;background:#28323c;"></div>
<div style="left:26px;top:245px;width:166.5px;height:1px;background:#4a6f92;"></div>
<div class="t" style="left:88.926953125px;top:247.50px;line-height:12px;font-size:8.3px;color:#d0d0d0;white-space:nowrap;font-kerning:none;">Màu</div>
<svg style="left:180.9px;top:249.1px" width="7" height="7"><path d="M.9 .9l5.200 5.200M6.100 .9l-5.200 5.200" stroke="#d4d4d4" stroke-width="1.700" stroke-linecap="round"/></svg>
<svg style="left:167.9px;top:248.6px" width="9" height="9"><path d="M3.500 1.500H.6V7.400H6.500V4.500" fill="none" stroke="#a4a4a4" stroke-width="1.100"/><path d="M3.800 4.200L7.500 .5M5.200 .5h2.400V2.800" fill="none" stroke="#b4b4b4" stroke-width="1"/></svg>
<div style="left:39.5px;top:273.7px;width:15px;height:14.5px;background:#ffffff;"></div>
<div style="left:32px;top:266px;width:16px;height:16px;background:#ff6e62;border:1.700px solid #ec1a1a;"></div>
<svg style="left:34.5px;top:294px" width="18" height="18" viewBox="0 0 18 18"><rect width="18" height="18" fill="#fff"/><g fill="#dedede"><rect x="6" y="0" width="6" height="6"/><rect x="0" y="6" width="6" height="6"/><rect x="12" y="6" width="6" height="6"/><rect x="6" y="12" width="6" height="6"/></g></svg>
<div class="t" style="left:32.5px;top:315.50px;line-height:12px;font-size:7.4px;color:#ddd;white-space:nowrap;font-kerning:none;letter-spacing:-0.450px;">R:255</div>
<div class="t" style="left:32.5px;top:323.70px;line-height:12px;font-size:7.43px;color:#ddd;white-space:nowrap;font-kerning:none;letter-spacing:-0.450px;">G:116</div>
<div class="t" style="left:32.5px;top:332.00px;line-height:12px;font-size:7.56px;color:#ddd;white-space:nowrap;font-kerning:none;letter-spacing:-0.450px;">B:102</div>
<div class="t" style="left:32.5px;top:345.50px;line-height:12px;font-size:7.91px;color:#ddd;white-space:nowrap;font-kerning:none;letter-spacing:-0.450px;">#FF7466</div>
<div style="left:34px;top:367px;width:17px;height:16.5px;background:#4a4a4a;border-radius:3px;box-shadow:inset 0 0 0 1px #555;"></div>
<svg style="left:34px;top:367px" width="17" height="16.5" viewBox="0 0 17 16.5"><path d="M8.500 3.500c-3.300 0 -5.500 2.200 -5.500 4.900 0 2.800 2.300 4.600 4.600 4.600 1.300 0 1.200 -1 .8 -1.600 -.5 -.8 0 -1.700 1.100 -1.700h1.700c1.700 0 2.800 -1 2.800 -2.400 0 -2.200 -2.400 -3.800 -5.500 -3.800z" fill="#f0f0f0" /><g fill="#4a4a4a"><circle cx="5.500" cy="7" r="1"/><circle cx="7.700" cy="5.400" r="1"/><circle cx="10.500" cy="5.600" r="1"/><circle cx="5.600" cy="10" r="1"/></g></svg>
<div style="left:54.5px;top:367px;width:16.5px;height:16.5px;background:#4a4a4a;border-radius:3px;box-shadow:inset 0 0 0 1px #555;"></div>
<svg style="left:54.5px;top:367px" width="16.5" height="16.5" viewBox="0 0 16.5 16.5"><g transform="translate(-1.200,-1.200) scale(0.88)"><path d="M8.500 3.500c-3.300 0 -5.500 2.200 -5.500 4.900 0 2.800 2.300 4.600 4.600 4.600 1.300 0 1.200 -1 .8 -1.600 -.5 -.8 0 -1.700 1.100 -1.700h1.700c1.700 0 2.800 -1 2.800 -2.400 0 -2.200 -2.400 -3.800 -5.500 -3.800z" fill="#f0f0f0" /><g fill="#4a4a4a"><circle cx="5.500" cy="7" r="1"/><circle cx="7.700" cy="5.400" r="1"/><circle cx="10.500" cy="5.600" r="1"/><circle cx="5.600" cy="10" r="1"/></g></g><path d="M8.500 10.500h6v3.500h-6z" fill="#f0f0f0" /><path d="M9.500 12.200h4" fill="none" stroke="#4a4a4a" stroke-width="0.8" stroke-linecap="round" stroke-linejoin="round" /></svg>
<div style="left:77px;top:262px;width:95px;height:137.5px;background:linear-gradient(to bottom,rgba(0,0,0,0),#000),linear-gradient(to right,#fff,#ff1400);"></div>
<div style="left:175px;top:262px;width:15px;height:137.5px;background:linear-gradient(to bottom,#ff0000 0%,#ff00ff 16.6%,#0000ff 33.3%,#00ffff 50%,#00ff00 66.6%,#ffff00 83.3%,#ff0000 100%);"></div>
<div style="left:77px;top:262px;width:95px;height:137.500px;overflow:hidden;"><svg style="left:51px;top:-5px" width="12" height="12"><circle cx="6" cy="6" r="3.600" fill="none" stroke="#fff" stroke-width="1.500"/></svg></div>
<div style="left:175px;top:262px;width:15px;height:137.500px;overflow:hidden;"><svg style="left:1.500px;top:128px" width="12" height="12"><circle cx="6" cy="6" r="3.400" fill="none" stroke="#fff" stroke-width="1.600"/></svg></div>
<div style="left:26px;top:405px;width:166.5px;height:126px;background:#262626;"></div>
<div style="left:26px;top:406px;width:166.5px;height:15px;background:linear-gradient(#2c3138 0,#343233 4px,#353232 100%);"></div>
<div style="left:26px;top:404px;width:166.5px;height:1px;background:#28323c;"></div>
<div style="left:26px;top:405px;width:166.5px;height:1px;background:#6496bc;"></div>
<div class="t" style="left:73.011865234375px;top:407.50px;line-height:12px;font-size:8.3px;color:#d0d0d0;white-space:nowrap;font-kerning:none;">Kiểm soát cọ</div>
<svg style="left:180.9px;top:409.1px" width="7" height="7"><path d="M.9 .9l5.200 5.200M6.100 .9l-5.200 5.200" stroke="#d4d4d4" stroke-width="1.700" stroke-linecap="round"/></svg>
<svg style="left:167.9px;top:408.6px" width="9" height="9"><path d="M3.500 1.500H.6V7.400H6.500V4.500" fill="none" stroke="#a4a4a4" stroke-width="1.100"/><path d="M3.800 4.200L7.500 .5M5.200 .5h2.400V2.800" fill="none" stroke="#b4b4b4" stroke-width="1"/></svg>
<div style="left:33px;top:430px;width:120px;height:11px;background:linear-gradient(90deg,#7cc0f5,#4f96d2);"></div>
<div style="left:139px;top:430px;width:14px;height:11px;background:#ffffff;"></div>
<div style="left:158.7px;top:428px;width:25.5px;height:15px;background:#454545;border-radius:2px;"></div>
<div class="t" style="left:163.7px;top:430.00px;line-height:12px;font-size:9px;color:#b0b0b0;white-space:nowrap;font-kerning:none;">100</div>
<div style="left:33px;top:448.7px;width:119px;height:11.3px;background:linear-gradient(90deg,#7cc0f5,#4f96d2);"></div>
<div class="t" style="left:157px;top:448.50px;line-height:12px;font-size:9.2px;color:#ddd;white-space:nowrap;font-kerning:none;letter-spacing:0.223px;">100 %</div>
<div style="left:192px;top:57px;width:551px;height:474px;background:#222222;"></div>
<div style="left:194px;top:57px;width:273.5px;height:16.5px;background:linear-gradient(#4a4a4a 0,#3c3c3c 55%,#313131 84%,#262626 86%);border-radius:2px 3px 0 0;"></div>
<div class="t" style="left:316.5px;top:59.00px;line-height:12px;font-size:8.3px;color:#bebebe;white-space:nowrap;font-kerning:none;letter-spacing:-0.018px;">Untitled</div>
<div style="left:194px;top:73.5px;width:530.5px;height:441.5px;background:#484644;"></div>
<div style="left:228px;top:155px;width:487px;height:360px;background:#ffffff;"></div>
<div style="left:724.5px;top:73.5px;width:13.5px;height:441.5px;background:linear-gradient(90deg,#3e3e3e,#2c2c2c);"></div>
<svg style="left:724.500px;top:73.5px" width="14" height="442"><path d="M3.500 8h7l-3.500 -5.500z" fill="#aaa"/><path d="M3.500 434.500h7l-3.500 5.500z" fill="#aaa"/></svg>
<div style="left:725px;top:224.7px;width:13px;height:107.6px;background:#6a6a6a;border-radius:3px;"></div>
<div style="left:194px;top:515px;width:544px;height:15px;background:linear-gradient(#222222,#353535);"></div>
<svg style="left:194px;top:515px" width="544" height="15"><path d="M8 4l-5.500 3.500 5.500 3.500z" fill="#aaa"/><path d="M537.500 4l5.500 3.500-5.500 3.500z" fill="#aaa"/></svg>
<div style="left:397px;top:516px;width:133.5px;height:13px;background:#696969;border-radius:3px;"></div>
<svg style="left:228px;top:155px" width="487" height="360" viewBox="228 155 487 360"><defs><linearGradient id="fade" gradientUnits="userSpaceOnUse" x1="571" y1="316" x2="577" y2="301"><stop offset="0" stop-color="#fff" stop-opacity="0"/><stop offset="1" stop-color="#fff" stop-opacity="1"/></linearGradient></defs><path d="M258.3 289.0C260.7 286.6 267.6 277.8 272.5 274.3C277.4 270.8 283.4 266.4 287.5 268.0C291.6 269.6 295.3 276.4 296.8 284.0C298.3 291.6 296.4 305.1 296.3 313.6C296.2 322.1 294.1 328.6 296.0 335.0C297.9 341.4 302.8 351.3 307.5 351.8C312.2 352.3 319.6 346.3 324.5 338.2C329.4 330.1 333.4 317.6 337.0 303.0C340.6 288.4 343.1 264.4 346.3 250.3C349.6 236.2 352.1 226.1 356.5 218.7C360.9 211.3 366.8 205.8 372.5 205.8C378.2 205.8 386.0 211.3 390.5 218.7C395.0 226.1 397.1 236.2 399.7 250.3C402.3 264.4 403.9 288.9 406.0 303.0C408.1 317.1 409.5 327.5 412.5 335.0C415.5 342.5 419.2 347.9 423.8 348.0C428.4 348.1 434.7 343.0 440.0 335.5C445.3 328.0 452.2 317.2 455.5 303.0C458.8 288.8 458.0 264.4 460.0 250.3C462.0 236.2 462.7 226.4 467.5 218.7C472.3 211.0 482.2 204.0 489.0 204.0C495.8 204.0 503.6 211.0 508.5 218.7C513.4 226.4 514.9 236.2 518.3 250.3C521.7 264.4 525.6 289.5 529.0 303.0C532.4 316.5 535.2 324.4 538.5 331.2C541.8 337.9 544.5 343.4 548.5 343.5C552.5 343.6 559.5 334.6 562.5 331.5C565.5 328.4 565.8 326.1 566.5 325.0" fill="none" stroke="#ff7466" stroke-width="18" stroke-linecap="round" stroke-linejoin="round"/><g fill="#ff7466"><circle cx="566.5" cy="325.0" r="9.00"/><circle cx="567.2" cy="323.7" r="8.88"/><circle cx="567.9" cy="322.4" r="8.71"/><circle cx="568.6" cy="321.2" r="8.51"/><circle cx="569.3" cy="319.9" r="8.29"/><circle cx="569.9" cy="318.7" r="8.05"/><circle cx="570.5" cy="317.5" r="7.80"/><circle cx="571.1" cy="316.3" r="7.53"/><circle cx="571.7" cy="315.1" r="7.25"/><circle cx="572.2" cy="314.0" r="6.96"/><circle cx="572.7" cy="312.9" r="6.67"/><circle cx="573.2" cy="311.7" r="6.36"/><circle cx="573.6" cy="310.7" r="6.04"/><circle cx="574.1" cy="309.6" r="5.72"/><circle cx="574.5" cy="308.5" r="5.39"/><circle cx="574.8" cy="307.5" r="5.05"/><circle cx="575.2" cy="306.5" r="4.70"/></g><rect x="556" y="290" width="36" height="40" fill="url(#fade)"/></svg>
<div style="left:743px;top:57px;width:281px;height:70px;background:#262626;"></div>
<div style="left:743px;top:58px;width:281px;height:15px;background:linear-gradient(#2c3138 0,#343233 4px,#353232 100%);"></div>
<div style="left:743px;top:56px;width:281px;height:1px;background:#28323c;"></div>
<div style="left:743px;top:57px;width:281px;height:1px;background:#6496bc;"></div>
<div class="t" style="left:856.54287109375px;top:59.50px;line-height:12px;font-size:8.3px;color:#d0d0d0;white-space:nowrap;font-kerning:none;">Hoa tiêu</div>
<svg style="left:1013.8px;top:61.099999999999994px" width="7" height="7"><path d="M.9 .9l5.200 5.200M6.100 .9l-5.200 5.200" stroke="#d4d4d4" stroke-width="1.700" stroke-linecap="round"/></svg>
<svg style="left:1000.8px;top:60.599999999999994px" width="9" height="9"><path d="M3.500 1.500H.6V7.400H6.500V4.500" fill="none" stroke="#a4a4a4" stroke-width="1.100"/><path d="M3.800 4.200L7.500 .5M5.200 .5h2.400V2.800" fill="none" stroke="#b4b4b4" stroke-width="1"/></svg>
<div style="left:743px;top:73px;width:281px;height:22px;background:#252525;"></div>
<div style="left:746px;top:76px;width:17px;height:17px;background:#4a4a4a;border-radius:3px;box-shadow:inset 0 0 0 1px #555;"></div>
<svg class="g" style="left:746px;top:76px" width="17" height="17" viewBox="0 0 17 17"><circle cx="7.300" cy="7.300" r="3.400" fill="none" stroke="#e0e0e0" stroke-width="1.100"/><path d="M10 10L12.600 12.600" fill="none" stroke="#e0e0e0" stroke-width="1.6" stroke-linecap="round" stroke-linejoin="round" /><g transform="translate(-.2,-.2)"><text x="7.500" y="9.600" text-anchor="middle" font-family="Liberation Sans,sans-serif" font-weight="bold" font-size="5.500" fill="#e8e8e8">1</text></g></svg>
<div style="left:771px;top:76px;width:17px;height:17px;background:#4a4a4a;border-radius:3px;box-shadow:inset 0 0 0 1px #555;"></div>
<svg style="left:771px;top:76px" width="17" height="17" viewBox="0 0 17 17"><circle cx="7.300" cy="7.300" r="3.400" fill="none" stroke="#e0e0e0" stroke-width="1.100"/><path d="M10 10L12.600 12.600" fill="none" stroke="#e0e0e0" stroke-width="1.6" stroke-linecap="round" stroke-linejoin="round" /><g transform="translate(-.2,-.2)"><path d="M5.700 7.500h3.600M7.500 5.700v3.600" fill="none" stroke="#f0f0f0" stroke-width="1" stroke-linecap="round" stroke-linejoin="round" /></g></svg>
<div style="left:791.7px;top:76px;width:17px;height:17px;background:#4a4a4a;border-radius:3px;box-shadow:inset 0 0 0 1px #555;"></div>
<svg style="left:791.7px;top:76px" width="17" height="17" viewBox="0 0 17 17"><path d="M3.500 3.500h10v10h-10z" fill="none" stroke="#bdbdbd" stroke-width="0.9" stroke-linecap="round" stroke-linejoin="round" /><path d="M4.500 4.500h3l-3 3zM12.500 4.500v3l-3 -3zM4.500 12.500v-3l3 3zM12.500 12.500h-3l3 -3z" fill="#f0f0f0" /></svg>
<div style="left:811.8px;top:76px;width:17px;height:17px;background:#4a4a4a;border-radius:3px;box-shadow:inset 0 0 0 1px #555;"></div>
<svg style="left:811.8px;top:76px" width="17" height="17" viewBox="0 0 17 17"><circle cx="7.300" cy="7.300" r="3.400" fill="none" stroke="#e0e0e0" stroke-width="1.100"/><path d="M10 10L12.600 12.600" fill="none" stroke="#e0e0e0" stroke-width="1.6" stroke-linecap="round" stroke-linejoin="round" /><g transform="translate(-.2,-.2)"><path d="M5.700 7.500h3.600" fill="none" stroke="#f0f0f0" stroke-width="1" stroke-linecap="round" stroke-linejoin="round" /></g></svg>
<div style="left:837px;top:76px;width:17px;height:17px;background:#4a4a4a;border-radius:3px;box-shadow:inset 0 0 0 1px #555;"></div>
<svg style="left:837px;top:76px" width="17" height="17" viewBox="0 0 17 17"><path d="M4.200 5.500A5.300 5.300 0 1 1 3.200 8.500" fill="none" stroke="#e0e0e0" stroke-width="1.200"/><path d="M2.500 3l3.800 .6 -2.600 3z" fill="#e0e0e0" /><rect x="6" y="6.500" width="5" height="4" fill="#d8d8d8" transform="rotate(-20 8.500 8.500)"/></svg>
<div style="left:857.5px;top:76px;width:17px;height:17px;background:#222222;border-radius:3px;box-shadow:inset 0 0 0 1px #555;"></div>
<svg style="left:857.5px;top:76px" width="17" height="17" viewBox="0 0 17 17"><path d="M5.500 5.800h6v5.400h-6z" fill="#f4f4f4" /><path d="M3.800 4.200l1.500 1.400M13.200 4.200l-1.500 1.400M3.800 12.800l1.500 -1.400M13.200 12.800l-1.500 -1.400" fill="none" stroke="#e8e8e8" stroke-width="1.2" stroke-linecap="round" stroke-linejoin="round" /></svg>
<div style="left:878px;top:76px;width:17px;height:17px;background:#4a4a4a;border-radius:3px;box-shadow:inset 0 0 0 1px #555;"></div>
<svg style="left:878px;top:76px" width="17" height="17" viewBox="0 0 17 17"><path d="M12.800 5.500A5.300 5.300 0 1 0 13.800 8.500" fill="none" stroke="#e0e0e0" stroke-width="1.200"/><path d="M14.500 3l-3.800 .6 2.600 3z" fill="#e0e0e0" /><rect x="6" y="6.500" width="5" height="4" fill="#d8d8d8" transform="rotate(20 8.500 8.500)"/></svg>
<div style="left:903.4px;top:76px;width:17px;height:17px;background:#4a4a4a;border-radius:3px;box-shadow:inset 0 0 0 1px #555;"></div>
<svg style="left:903.4px;top:76px" width="17" height="17" viewBox="0 0 17 17"><path d="M4 7.500h3.500V13H4z" fill="#e8e8e8" /><path d="M10 7.500h3V13h-3z" fill="none" stroke="#e0e0e0" stroke-width="1" stroke-linecap="round" stroke-linejoin="round" /><path d="M5.500 6.200C6 3 11 3 11.700 5.800" fill="none" stroke="#d8d8d8" stroke-width="1"/><path d="M12.800 4.200l-.6 2.600 -2 -1.500z" fill="#d8d8d8" /></svg>
<div style="left:767px;top:80px;width:1px;height:9px;background:#555;"></div>
<div style="left:833px;top:80px;width:1px;height:9px;background:#555;"></div>
<div style="left:899px;top:80px;width:1px;height:9px;background:#555;"></div>
<div style="left:743px;top:95px;width:281px;height:29px;background:#484645;"></div>
<svg style="left:866px;top:96px;overflow:hidden" width="34" height="28" viewBox="0 0 34 28"><rect width="34" height="28" fill="#fff"/><path transform="translate(1.400,0.200) scale(0.0678) translate(-228,-155)" d="M258.3 289.0C260.7 286.6 267.6 277.8 272.5 274.3C277.4 270.8 283.4 266.4 287.5 268.0C291.6 269.6 295.3 276.4 296.8 284.0C298.3 291.6 296.4 305.1 296.3 313.6C296.2 322.1 294.1 328.6 296.0 335.0C297.9 341.4 302.8 351.3 307.5 351.8C312.2 352.3 319.6 346.3 324.5 338.2C329.4 330.1 333.4 317.6 337.0 303.0C340.6 288.4 343.1 264.4 346.3 250.3C349.6 236.2 352.1 226.1 356.5 218.7C360.9 211.3 366.8 205.8 372.5 205.8C378.2 205.8 386.0 211.3 390.5 218.7C395.0 226.1 397.1 236.2 399.7 250.3C402.3 264.4 403.9 288.9 406.0 303.0C408.1 317.1 409.5 327.5 412.5 335.0C415.5 342.5 419.2 347.9 423.8 348.0C428.4 348.1 434.7 343.0 440.0 335.5C445.3 328.0 452.2 317.2 455.5 303.0C458.8 288.8 458.0 264.4 460.0 250.3C462.0 236.2 462.7 226.4 467.5 218.7C472.3 211.0 482.2 204.0 489.0 204.0C495.8 204.0 503.6 211.0 508.5 218.7C513.4 226.4 514.9 236.2 518.3 250.3C521.7 264.4 525.6 289.5 529.0 303.0C532.4 316.5 535.2 324.4 538.5 331.2C541.8 337.9 544.5 343.4 548.5 343.5C552.5 343.6 559.5 334.6 562.5 331.5C565.5 328.4 565.8 326.1 566.5 325.0" fill="none" stroke="#ee7c86" stroke-width="18" stroke-linecap="round"/><rect x="0.600" y="-1" width="32.800" height="24.300" fill="none" stroke="#e01020" stroke-width="1.200"/></svg>
<div style="left:743px;top:127px;width:281px;height:217px;background:#262626;"></div>
<div style="left:743px;top:128px;width:281px;height:15px;background:linear-gradient(#2c3138 0,#343233 4px,#353232 100%);"></div>
<div style="left:743px;top:126px;width:281px;height:1px;background:#28323c;"></div>
<div style="left:743px;top:127px;width:281px;height:1px;background:#6496bc;"></div>
<div class="t" style="left:864.6625244140625px;top:129.50px;line-height:12px;font-size:8.3px;color:#d0d0d0;white-space:nowrap;font-kerning:none;">Lớp</div>
<svg style="left:1013.8px;top:131.1px" width="7" height="7"><path d="M.9 .9l5.200 5.200M6.100 .9l-5.200 5.200" stroke="#d4d4d4" stroke-width="1.700" stroke-linecap="round"/></svg>
<svg style="left:1000.8px;top:130.6px" width="9" height="9"><path d="M3.500 1.500H.6V7.400H6.500V4.500" fill="none" stroke="#a4a4a4" stroke-width="1.100"/><path d="M3.800 4.200L7.500 .5M5.200 .5h2.400V2.800" fill="none" stroke="#b4b4b4" stroke-width="1"/></svg>
<div class="t" style="left:747px;top:148.60px;line-height:12px;font-size:8.3px;color:#e0e0e0;white-space:nowrap;font-kerning:none;letter-spacing:0.021px;">Độ trong</div>
<div style="left:818px;top:148.4px;width:163.5px;height:11.3px;background:linear-gradient(90deg,#7cc0f5,#4f96d2);"></div>
<div class="t" style="left:987px;top:148.60px;line-height:12px;font-size:8.3px;color:#ddd;white-space:nowrap;font-kerning:none;letter-spacing:-0.107px;">100 %</div>
<div class="t" style="left:746.7px;top:167.00px;line-height:12px;font-size:8.3px;color:#e0e0e0;white-space:nowrap;font-kerning:none;letter-spacing:-0.060px;">Pha trộn</div>
<div style="left:819px;top:164.7px;width:200px;height:16px;background:#484848;border-radius:2px;"></div>
<div class="t" style="left:820.4px;top:167.00px;line-height:12px;font-size:8.3px;color:#d8d8d8;white-space:nowrap;font-kerning:none;letter-spacing:-0.267px;">Bình thường</div>
<svg style="left:1010px;top:171.500px" width="6" height="4"><path d="M0 0h5.600l-2.800 3.200z" fill="#a0a0a0"/></svg>
<div style="left:749.5px;top:188.5px;width:8.5px;height:8.5px;background:transparent;border:1px solid #ccc;"></div>
<div class="t" style="left:762px;top:186.60px;line-height:12px;font-size:8.3px;color:#e0e0e0;white-space:nowrap;font-kerning:none;letter-spacing:-0.205px;">Bảo vệ alpha</div>
<div style="left:842px;top:188.5px;width:8.5px;height:8.5px;background:transparent;border:1px solid #484848;"></div>
<div class="t" style="left:854px;top:186.60px;line-height:12px;font-size:8.3px;color:#666;white-space:nowrap;font-kerning:none;letter-spacing:-0.206px;">Xén bớt</div>
<div style="left:934px;top:188.5px;width:8.5px;height:8.5px;background:transparent;border:1px solid #ccc;"></div>
<div class="t" style="left:946px;top:186.60px;line-height:12px;font-size:8.3px;color:#e0e0e0;white-space:nowrap;font-kerning:none;letter-spacing:-0.346px;">Khóa</div>
<div style="left:745px;top:203px;width:262.5px;height:112.7px;background:#484645;"></div>
<div style="left:745px;top:203px;width:14px;height:29px;background:#585858;"></div>
<div style="left:759px;top:203px;width:248px;height:29px;background:#559bd5;"></div>
<svg style="left:748px;top:213.500px" width="8" height="8"><circle cx="4" cy="4" r="3.400" fill="#e8e8e8"/></svg>
<svg style="left:770.800px;top:206.600px" width="25.4" height="21.5" viewBox="0 0 25.4 21.5"><rect width="25.4" height="21.5" fill="#fff"/><g fill="#e9e9e9"><rect x="0.0" y="0.0" width="3.2" height="3.1"/><rect x="6.4" y="0.0" width="3.2" height="3.1"/><rect x="12.8" y="0.0" width="3.2" height="3.1"/><rect x="19.2" y="0.0" width="3.2" height="3.1"/><rect x="3.2" y="3.1" width="3.2" height="3.1"/><rect x="9.6" y="3.1" width="3.2" height="3.1"/><rect x="16.0" y="3.1" width="3.2" height="3.1"/><rect x="22.4" y="3.1" width="3.2" height="3.1"/><rect x="0.0" y="6.2" width="3.2" height="3.1"/><rect x="6.4" y="6.2" width="3.2" height="3.1"/><rect x="12.8" y="6.2" width="3.2" height="3.1"/><rect x="19.2" y="6.2" width="3.2" height="3.1"/><rect x="3.2" y="9.3" width="3.2" height="3.1"/><rect x="9.6" y="9.3" width="3.2" height="3.1"/><rect x="16.0" y="9.3" width="3.2" height="3.1"/><rect x="22.4" y="9.3" width="3.2" height="3.1"/><rect x="0.0" y="12.4" width="3.2" height="3.1"/><rect x="6.4" y="12.4" width="3.2" height="3.1"/><rect x="12.8" y="12.4" width="3.2" height="3.1"/><rect x="19.2" y="12.4" width="3.2" height="3.1"/><rect x="3.2" y="15.5" width="3.2" height="3.1"/><rect x="9.6" y="15.5" width="3.2" height="3.1"/><rect x="16.0" y="15.5" width="3.2" height="3.1"/><rect x="22.4" y="15.5" width="3.2" height="3.1"/><rect x="0.0" y="18.6" width="3.2" height="3.1"/><rect x="6.4" y="18.6" width="3.2" height="3.1"/><rect x="12.8" y="18.6" width="3.2" height="3.1"/><rect x="19.2" y="18.6" width="3.2" height="3.1"/></g><path transform="translate(0,-0.400) scale(0.052) translate(-228,-155)" d="M258.3 289.0C260.7 286.6 267.6 277.8 272.5 274.3C277.4 270.8 283.4 266.4 287.5 268.0C291.6 269.6 295.3 276.4 296.8 284.0C298.3 291.6 296.4 305.1 296.3 313.6C296.2 322.1 294.1 328.6 296.0 335.0C297.9 341.4 302.8 351.3 307.5 351.8C312.2 352.3 319.6 346.3 324.5 338.2C329.4 330.1 333.4 317.6 337.0 303.0C340.6 288.4 343.1 264.4 346.3 250.3C349.6 236.2 352.1 226.1 356.5 218.7C360.9 211.3 366.8 205.8 372.5 205.8C378.2 205.8 386.0 211.3 390.5 218.7C395.0 226.1 397.1 236.2 399.7 250.3C402.3 264.4 403.9 288.9 406.0 303.0C408.1 317.1 409.5 327.5 412.5 335.0C415.5 342.5 419.2 347.9 423.8 348.0C428.4 348.1 434.7 343.0 440.0 335.5C445.3 328.0 452.2 317.2 455.5 303.0C458.8 288.8 458.0 264.4 460.0 250.3C462.0 236.2 462.7 226.4 467.5 218.7C472.3 211.0 482.2 204.0 489.0 204.0C495.8 204.0 503.6 211.0 508.5 218.7C513.4 226.4 514.9 236.2 518.3 250.3C521.7 264.4 525.6 289.5 529.0 303.0C532.4 316.5 535.2 324.4 538.5 331.2C541.8 337.9 544.5 343.4 548.5 343.5C552.5 343.6 559.5 334.6 562.5 331.5C565.5 328.4 565.8 326.1 566.5 325.0" fill="none" stroke="#f06a78" stroke-width="19" stroke-linecap="round"/></svg>
<div class="t" style="left:808.5px;top:212.00px;line-height:12px;font-size:9px;color:#fff;white-space:nowrap;font-kerning:none;font-weight:bold;letter-spacing:0.175px;">Lớp1</div>
<svg style="left:990.500px;top:210.500px" width="14" height="14"><path d="M14.17 6.92L14.17 8.28L11.41 8.85L11.09 9.63L12.63 11.98L11.68 12.93L9.33 11.39L8.55 11.71L7.98 14.47L6.62 14.47L6.05 11.71L5.27 11.39L2.92 12.93L1.97 11.98L3.51 9.63L3.19 8.85L0.43 8.28L0.43 6.92L3.19 6.35L3.51 5.57L1.97 3.22L2.92 2.27L5.27 3.81L6.05 3.49L6.62 0.73L7.98 0.73L8.55 3.49L9.33 3.81L11.68 2.27L12.63 3.22L11.09 5.57L11.41 6.35z" fill="#fff"/><circle cx="7.3" cy="7.6" r="1.3" fill="#559bd5"/></svg>
<div style="left:1007.5px;top:203px;width:15px;height:112.7px;background:linear-gradient(90deg,#3a3a3a,#2a2a2a);"></div>
<svg style="left:1007.5px;top:203px" width="15" height="112.7"><path d="M4.0 6.2h7l-3.500 -5z" fill="#a8a8a8"/><path d="M4.0 106.5h7l-3.500 5z" fill="#a8a8a8"/></svg>
<div style="left:1008.0px;top:211px;width:13.5px;height:95.69999999999999px;background:#747474;border-radius:4px;"></div>
<div style="left:743px;top:316px;width:281px;height:23px;background:#252525;"></div>
<div style="left:747px;top:319.4px;width:17.5px;height:16.5px;background:#4a4a4a;border-radius:3px;box-shadow:inset 0 0 0 1px #555;"></div>
<svg style="left:747px;top:319.4px" width="17.5" height="16.5" viewBox="0 0 17.5 16.5"><path d="M4.500 3h5.500L13 6v8.500H4.500z" fill="none" stroke="#dcdcdc" stroke-width="1.1" stroke-linecap="round" stroke-linejoin="round" /><path d="M9.800 3.200V6.200H12.800" fill="none" stroke="#dcdcdc" stroke-width="0.9" stroke-linecap="round" stroke-linejoin="round" /></svg>
<div style="left:767.5px;top:319.4px;width:17px;height:16.5px;background:#4a4a4a;border-radius:3px;box-shadow:inset 0 0 0 1px #555;"></div>
<svg class="g" style="left:767.5px;top:319.4px" width="17" height="16.5" viewBox="0 0 17 16.5"><path d="M4.500 3h5.500L13 6v8.500H4.500z" fill="none" stroke="#dcdcdc" stroke-width="1.1" stroke-linecap="round" stroke-linejoin="round" /><path d="M9.800 3.200V6.200H12.800" fill="none" stroke="#dcdcdc" stroke-width="0.9" stroke-linecap="round" stroke-linejoin="round" /><text x="8.600" y="13.200" text-anchor="middle" font-family="Liberation Sans,sans-serif" font-weight="bold" font-size="7" fill="#e8e8e8">8</text></svg>
<div style="left:788px;top:319.4px;width:17px;height:16.5px;background:#4a4a4a;border-radius:3px;box-shadow:inset 0 0 0 1px #555;"></div>
<svg class="g" style="left:788px;top:319.4px" width="17" height="16.5" viewBox="0 0 17 16.5"><path d="M4.500 3h5.500L13 6v8.500H4.500z" fill="none" stroke="#dcdcdc" stroke-width="1.1" stroke-linecap="round" stroke-linejoin="round" /><path d="M9.800 3.200V6.200H12.800" fill="none" stroke="#dcdcdc" stroke-width="0.9" stroke-linecap="round" stroke-linejoin="round" /><text x="8.600" y="13.200" text-anchor="middle" font-family="Liberation Sans,sans-serif" font-weight="bold" font-size="7" fill="#e8e8e8">1</text></svg>
<div style="left:808px;top:319.4px;width:22px;height:16.5px;background:#4a4a4a;border-radius:3px;box-shadow:inset 0 0 0 1px #555;"></div>
<svg style="left:808px;top:319.4px" width="22" height="16.5" viewBox="0 0 22 16.5"><path d="M3.500 2.500h4.500L10.500 5v6.500H3.500z" fill="none" stroke="#d8d8d8" stroke-width="1" stroke-linecap="round" stroke-linejoin="round" /><path d="M9.800 10v5M7.300 12.500h5" fill="none" stroke="#f4f4f4" stroke-width="1.4" stroke-linecap="round" stroke-linejoin="round" /><path d="M14.800 7.500h5l-2.500 3z" fill="#f0f0f0" /></svg>
<div style="left:833px;top:319.4px;width:17.5px;height:16.5px;background:#4a4a4a;border-radius:3px;box-shadow:inset 0 0 0 1px #555;"></div>
<svg style="left:833px;top:319.4px" width="17.5" height="16.5" viewBox="0 0 17.5 16.5"><path d="M3.500 4.500h4l1.200 1.500H14v7.500H3.500z" fill="#e6e6e6" /></svg>
<div style="left:859px;top:319.4px;width:17px;height:16.5px;background:#4a4a4a;border-radius:3px;box-shadow:inset 0 0 0 1px #555;"></div>
<svg style="left:859px;top:319.4px" width="17" height="16.5" viewBox="0 0 17 16.5"><path d="M6.500 6.500V4h7v7H11" fill="none" stroke="#c8c8c8" stroke-width="1" stroke-linecap="round" stroke-linejoin="round" /><path d="M3.800 6.500h7v7h-7z" fill="none" stroke="#dcdcdc" stroke-width="1.1" stroke-linecap="round" stroke-linejoin="round" /></svg>
<div style="left:879.4px;top:319.4px;width:17px;height:16.5px;background:#222222;border-radius:3px;box-shadow:inset 0 0 0 1px #555;"></div>
<svg style="left:879.4px;top:319.4px" width="17" height="16.5" viewBox="0 0 17 16.5"><path d="M3.500 3.500h3.500v3.500H3.500zM3.500 10h3.500v3.500H3.500zM10.500 6.800h3.500v3.500h-3.500z" fill="#e8e8e8" /><path d="M7.500 5.200h1.500v7h-1.500M9 8.500h1.500" fill="none" stroke="#cfcfcf" stroke-width="0.9" stroke-linecap="round" stroke-linejoin="round" /></svg>
<div style="left:904.7px;top:319.4px;width:17px;height:16.5px;background:#222222;border-radius:3px;box-shadow:inset 0 0 0 1px #555;"></div>
<svg style="left:904.7px;top:319.4px" width="17" height="16.5" viewBox="0 0 17 16.5"><path d="M4.500 6h8.500v8.500H4.500z" fill="none" stroke="#ececec" stroke-width="1.2" stroke-linecap="round" stroke-linejoin="round" /><path d="M7.300 7.500v5.500M10.200 7.500v5.500" fill="none" stroke="#ececec" stroke-width="1.1" stroke-linecap="round" stroke-linejoin="round" /><path d="M3.500 4.800h10.500" fill="none" stroke="#ececec" stroke-width="1.3" stroke-linecap="round" stroke-linejoin="round" /><path d="M7 4.500V3.300h3.500v1.200" fill="none" stroke="#ececec" stroke-width="1" stroke-linecap="round" stroke-linejoin="round" /></svg>
<div style="left:854px;top:323.5px;width:1px;height:9px;background:#555;"></div>
<div style="left:900px;top:323.5px;width:1px;height:9px;background:#555;"></div>
<div style="left:743px;top:344px;width:281px;height:53px;background:#262626;"></div>
<div style="left:743px;top:345px;width:281px;height:15px;background:linear-gradient(#2c3138 0,#343233 4px,#353232 100%);"></div>
<div style="left:743px;top:343px;width:281px;height:1px;background:#28323c;"></div>
<div style="left:743px;top:344px;width:281px;height:1px;background:#6496bc;"></div>
<div class="t" style="left:852.7028564453125px;top:346.50px;line-height:12px;font-size:8.3px;color:#d0d0d0;white-space:nowrap;font-kerning:none;">Reference</div>
<svg style="left:1013.8px;top:348.1px" width="7" height="7"><path d="M.9 .9l5.200 5.200M6.100 .9l-5.200 5.200" stroke="#d4d4d4" stroke-width="1.700" stroke-linecap="round"/></svg>
<svg style="left:1000.8px;top:347.6px" width="9" height="9"><path d="M3.500 1.500H.6V7.400H6.500V4.500" fill="none" stroke="#a4a4a4" stroke-width="1.100"/><path d="M3.800 4.200L7.500 .5M5.200 .5h2.400V2.800" fill="none" stroke="#b4b4b4" stroke-width="1"/></svg>
<div style="left:743px;top:360px;width:281px;height:22.5px;background:#252525;"></div>
<div style="left:746.4px;top:363px;width:17px;height:17px;background:#4a4a4a;border-radius:3px;box-shadow:inset 0 0 0 1px #555;"></div>
<svg style="left:746.4px;top:363px" width="17" height="17" viewBox="0 0 17 17"><path d="M4.500 11a2.500 2.500 0 0 1 -.3 -4.950a3.300 3.300 0 0 1 6.300 -.9a2.800 2.800 0 0 1 1.400 5.400a2 2 0 0 1 -.9 .45z" fill="#f0f0f0" /><path d="M8.500 14.500V8.500" fill="none" stroke="#f0f0f0" stroke-width="2.4" stroke-linecap="round" stroke-linejoin="round" /><path d="M8.500 14V8" fill="none" stroke="#4a4a4a" stroke-width="1.2" stroke-linecap="round" stroke-linejoin="round" /><path d="M8.500 5.500l3 3.500h-6z" fill="#4a4a4a" /><path d="M8.500 14.600v-2.800" fill="none" stroke="#f0f0f0" stroke-width="2.2" stroke-linecap="round" stroke-linejoin="round" /></svg>
<div style="left:766px;top:363px;width:17px;height:17px;background:#4a4a4a;border-radius:3px;box-shadow:inset 0 0 0 1px #555;"></div>
<svg style="left:766px;top:363px" width="17" height="17" viewBox="0 0 17 17"><path d="M3.500 12.500V4.500h3.500l1 1.300h4.500V7.500" fill="none" stroke="#dcdcdc" stroke-width="1.1" stroke-linecap="round" stroke-linejoin="round" /><path d="M5.300 8h9.200l-1.800 5H3.500z" fill="#e0e0e0" /></svg>
<div style="left:786px;top:363px;width:17px;height:17px;background:#222222;border-radius:3px;box-shadow:inset 0 0 0 1px #555;"></div>
<svg style="left:786px;top:363px" width="17" height="17" viewBox="0 0 17 17"><path d="M5.500 5.500l6 6M11.500 5.500l-6 6" fill="none" stroke="#f0f0f0" stroke-width="1.6" stroke-linecap="round" stroke-linejoin="round" /></svg>
<div style="left:812px;top:363px;width:17px;height:17px;background:#222222;border-radius:3px;box-shadow:inset 0 0 0 1px #555;"></div>
<svg style="left:812px;top:363px" width="17" height="17" viewBox="0 0 17 17"><circle cx="7.300" cy="7.300" r="3.400" fill="none" stroke="#e0e0e0" stroke-width="1.100"/><path d="M10 10L12.600 12.600" fill="none" stroke="#e0e0e0" stroke-width="1.6" stroke-linecap="round" stroke-linejoin="round" /><g transform="translate(-.2,-.2)"><path d="M5.700 7.500h3.600M7.500 5.700v3.600" fill="none" stroke="#f0f0f0" stroke-width="1" stroke-linecap="round" stroke-linejoin="round" /></g></svg>
<div style="left:832px;top:363px;width:17px;height:17px;background:#222222;border-radius:3px;box-shadow:inset 0 0 0 1px #555;"></div>
<svg style="left:832px;top:363px" width="17" height="17" viewBox="0 0 17 17"><path d="M3.500 3.500h10v10h-10z" fill="none" stroke="#bdbdbd" stroke-width="0.9" stroke-linecap="round" stroke-linejoin="round" /><path d="M4.500 4.500h3l-3 3zM12.500 4.500v3l-3 -3zM4.500 12.500v-3l3 3zM12.500 12.500h-3l3 -3z" fill="#f0f0f0" /></svg>
<div style="left:852px;top:363px;width:17px;height:17px;background:#222222;border-radius:3px;box-shadow:inset 0 0 0 1px #555;"></div>
<svg style="left:852px;top:363px" width="17" height="17" viewBox="0 0 17 17"><circle cx="7.300" cy="7.300" r="3.400" fill="none" stroke="#e0e0e0" stroke-width="1.100"/><path d="M10 10L12.600 12.600" fill="none" stroke="#e0e0e0" stroke-width="1.6" stroke-linecap="round" stroke-linejoin="round" /><g transform="translate(-.2,-.2)"><path d="M5.700 7.500h3.600" fill="none" stroke="#f0f0f0" stroke-width="1" stroke-linecap="round" stroke-linejoin="round" /></g></svg>
<div style="left:878px;top:363px;width:17px;height:17px;background:#222222;border-radius:3px;box-shadow:inset 0 0 0 1px #555;"></div>
<svg style="left:878px;top:363px" width="17" height="17" viewBox="0 0 17 17"><path d="M9.800 7.300L4.500 12.600l-1 .9 .9 -1L9.200 6.700" fill="none" stroke="#ececec" stroke-width="1.1" stroke-linecap="round" stroke-linejoin="round" /><path d="M8.700 5l3.700 3.700 .8 -.8 -1 -1 1.500 -1.500a1.500 1.500 0 0 0 -2.100 -2.100L10.100 4.800 9.100 3.800z" fill="#ececec" /></svg>
<div style="left:898px;top:363px;width:17px;height:17px;background:#4f9fdf;border-radius:3px;box-shadow:inset 0 0 0 1px #6ab3ea;"></div>
<svg style="left:898px;top:363px" width="17" height="17" viewBox="0 0 17 17"><path d="M5.300 14.500c-1 -1.400 -2.200 -3 -3 -4.300 -.5 -.8 .4 -1.500 1.100 -.8l1.500 1.400V4.500c0 -.9 1.300 -.9 1.300 0v3.600h.4V3.300c0 -.9 1.300 -.9 1.300 0v4.800h.4V3.700c0 -.9 1.300 -.9 1.300 0v4.700h.4V5.400c0 -.9 1.300 -.9 1.300 0v5.200c0 1.700 -.6 2.800 -1.300 3.900z" fill="#ffffff" /></svg>
<div style="left:923.6px;top:363px;width:17px;height:17px;background:#222222;border-radius:3px;box-shadow:inset 0 0 0 1px #555;"></div>
<svg style="left:923.6px;top:363px" width="17" height="17" viewBox="0 0 17 17"><path d="M4.200 5.500A5.300 5.300 0 1 1 3.200 8.500" fill="none" stroke="#e0e0e0" stroke-width="1.200"/><path d="M2.500 3l3.800 .6 -2.600 3z" fill="#e0e0e0" /><rect x="6" y="6.500" width="5" height="4" fill="#d8d8d8" transform="rotate(-20 8.500 8.500)"/></svg>
<div style="left:944px;top:363px;width:17px;height:17px;background:#222222;border-radius:3px;box-shadow:inset 0 0 0 1px #555;"></div>
<svg style="left:944px;top:363px" width="17" height="17" viewBox="0 0 17 17"><path d="M5.500 5.800h6v5.400h-6z" fill="#f4f4f4" /><path d="M3.800 4.200l1.500 1.400M13.200 4.200l-1.500 1.400M3.800 12.800l1.500 -1.400M13.200 12.800l-1.500 -1.400" fill="none" stroke="#e8e8e8" stroke-width="1.2" stroke-linecap="round" stroke-linejoin="round" /></svg>
<div style="left:964px;top:363px;width:17px;height:17px;background:#222222;border-radius:3px;box-shadow:inset 0 0 0 1px #555;"></div>
<svg style="left:964px;top:363px" width="17" height="17" viewBox="0 0 17 17"><path d="M12.800 5.500A5.300 5.300 0 1 0 13.800 8.500" fill="none" stroke="#e0e0e0" stroke-width="1.200"/><path d="M14.500 3l-3.800 .6 2.600 3z" fill="#e0e0e0" /><rect x="6" y="6.500" width="5" height="4" fill="#d8d8d8" transform="rotate(20 8.500 8.500)"/></svg>
<div style="left:989px;top:363px;width:17px;height:17px;background:#222222;border-radius:3px;box-shadow:inset 0 0 0 1px #555;"></div>
<svg style="left:989px;top:363px" width="17" height="17" viewBox="0 0 17 17"><path d="M4 7.500h3.500V13H4z" fill="#e8e8e8" /><path d="M10 7.500h3V13h-3z" fill="none" stroke="#e0e0e0" stroke-width="1" stroke-linecap="round" stroke-linejoin="round" /><path d="M5.500 6.200C6 3 11 3 11.700 5.800" fill="none" stroke="#d8d8d8" stroke-width="1"/><path d="M12.800 4.200l-.6 2.600 -2 -1.500z" fill="#d8d8d8" /></svg>
<div style="left:807px;top:367px;width:1px;height:9px;background:#555;"></div>
<div style="left:873px;top:367px;width:1px;height:9px;background:#555;"></div>
<div style="left:919px;top:367px;width:1px;height:9px;background:#555;"></div>
<div style="left:985px;top:367px;width:1px;height:9px;background:#555;"></div>
<svg style="left:743px;top:382.700px" width="281" height="10.2" viewBox="0 0 281 10.2"><defs><pattern id="ck" width="6" height="6" patternUnits="userSpaceOnUse"><rect width="6" height="6" fill="#fff"/><rect width="3" height="3" fill="#e6e6e6"/><rect x="3" y="3" width="3" height="3" fill="#e6e6e6"/></pattern></defs><rect width="281" height="10.200" fill="url(#ck)"/></svg>
<div style="left:743px;top:397px;width:281px;height:134px;background:#262626;"></div>
<div style="left:743px;top:398px;width:281px;height:15px;background:linear-gradient(#2c3138 0,#343233 4px,#353232 100%);"></div>
<div style="left:743px;top:396px;width:281px;height:1px;background:#28323c;"></div>
<div style="left:743px;top:397px;width:281px;height:1px;background:#4f6d89;"></div>
<div class="t" style="left:851.4328857421875px;top:399.50px;line-height:12px;font-size:8.3px;color:#d0d0d0;white-space:nowrap;font-kerning:none;">Brush Size</div>
<svg style="left:1013.8px;top:401.1px" width="7" height="7"><path d="M.9 .9l5.200 5.200M6.100 .9l-5.200 5.200" stroke="#d4d4d4" stroke-width="1.700" stroke-linecap="round"/></svg>
<svg style="left:1000.8px;top:400.6px" width="9" height="9"><path d="M3.500 1.500H.6V7.400H6.500V4.500" fill="none" stroke="#a4a4a4" stroke-width="1.100"/><path d="M3.800 4.200L7.500 .5M5.200 .5h2.400V2.800" fill="none" stroke="#b4b4b4" stroke-width="1"/></svg>
<div style="left:743px;top:412.5px;width:264.5px;height:118px;background:#484645;"></div>
<div style="left:743px;top:412.5px;width:30px;height:37.2px;background:#5a5a5a;border-right:1px solid #4e4e4e;border-bottom:1px solid #4e4e4e;"></div>
<svg style="left:743px;top:412.5px" width="30" height="37"><circle cx="14.500" cy="15.2" r="0.3" fill="#f2f2f2" opacity="0.25"/></svg>
<div class="t" style="left:755.38662109375px;top:439.20px;line-height:12px;font-size:7.6px;color:#f4f4f4;white-space:nowrap;font-kerning:none;">1</div>
<div style="left:773px;top:412.5px;width:30px;height:37.2px;background:#5a5a5a;border-right:1px solid #4e4e4e;border-bottom:1px solid #4e4e4e;"></div>
<svg style="left:773px;top:412.5px" width="30" height="37"><circle cx="14.500" cy="15.2" r="0.45" fill="#f2f2f2" opacity="0.55"/></svg>
<div class="t" style="left:782.21748046875px;top:439.20px;line-height:12px;font-size:7.6px;color:#f4f4f4;white-space:nowrap;font-kerning:none;">1.5</div>
<div style="left:803px;top:412.5px;width:30px;height:37.2px;background:#5a5a5a;border-right:1px solid #4e4e4e;border-bottom:1px solid #4e4e4e;"></div>
<svg style="left:803px;top:412.5px" width="30" height="37"><circle cx="14.500" cy="15.2" r="0.6" fill="#f2f2f2" opacity="0.55"/></svg>
<div class="t" style="left:815.38662109375px;top:439.20px;line-height:12px;font-size:7.6px;color:#f4f4f4;white-space:nowrap;font-kerning:none;">2</div>
<div style="left:833px;top:412.5px;width:30px;height:37.2px;background:#5a5a5a;border-right:1px solid #4e4e4e;border-bottom:1px solid #4e4e4e;"></div>
<svg style="left:833px;top:412.5px" width="30" height="37"><circle cx="14.500" cy="15.2" r="0.9" fill="#f2f2f2" opacity="1"/></svg>
<div class="t" style="left:845.38662109375px;top:439.20px;line-height:12px;font-size:7.6px;color:#f4f4f4;white-space:nowrap;font-kerning:none;">3</div>
<div style="left:863px;top:412.5px;width:30px;height:37.2px;background:#5a5a5a;border-right:1px solid #4e4e4e;border-bottom:1px solid #4e4e4e;"></div>
<svg style="left:863px;top:412.5px" width="30" height="37"><circle cx="14.500" cy="15.2" r="1.3" fill="#f2f2f2" opacity="1"/></svg>
<div class="t" style="left:875.38662109375px;top:439.20px;line-height:12px;font-size:7.6px;color:#f4f4f4;white-space:nowrap;font-kerning:none;">4</div>
<div style="left:893px;top:412.5px;width:30px;height:37.2px;background:#5a5a5a;border-right:1px solid #4e4e4e;border-bottom:1px solid #4e4e4e;"></div>
<svg style="left:893px;top:412.5px" width="30" height="37"><circle cx="14.500" cy="15.2" r="1.6" fill="#f2f2f2" opacity="1"/></svg>
<div class="t" style="left:905.38662109375px;top:439.20px;line-height:12px;font-size:7.6px;color:#f4f4f4;white-space:nowrap;font-kerning:none;">5</div>
<div style="left:923px;top:412.5px;width:30px;height:37.2px;background:#5a5a5a;border-right:1px solid #4e4e4e;border-bottom:1px solid #4e4e4e;"></div>
<svg style="left:923px;top:412.5px" width="30" height="37"><circle cx="14.500" cy="15.2" r="2.5" fill="#f2f2f2" opacity="1"/></svg>
<div class="t" style="left:935.38662109375px;top:439.20px;line-height:12px;font-size:7.6px;color:#f4f4f4;white-space:nowrap;font-kerning:none;">7</div>
<div style="left:953px;top:412.5px;width:30px;height:37.2px;background:#5a5a5a;border-right:1px solid #4e4e4e;border-bottom:1px solid #4e4e4e;"></div>
<svg style="left:953px;top:412.5px" width="30" height="37"><circle cx="14.500" cy="15.2" r="3.75" fill="#f2f2f2" opacity="1"/></svg>
<div class="t" style="left:963.2732421875px;top:439.20px;line-height:12px;font-size:7.6px;color:#f4f4f4;white-space:nowrap;font-kerning:none;">10</div>
<div style="left:743px;top:449.7px;width:30px;height:37.2px;background:#5a5a5a;border-right:1px solid #4e4e4e;border-bottom:1px solid #4e4e4e;"></div>
<svg style="left:743px;top:449.7px" width="30" height="37"><circle cx="14.500" cy="15.2" r="4.75" fill="#f2f2f2" opacity="1"/></svg>
<div class="t" style="left:753.2732421875px;top:476.40px;line-height:12px;font-size:7.6px;color:#f4f4f4;white-space:nowrap;font-kerning:none;">12</div>
<div style="left:773px;top:449.7px;width:30px;height:37.2px;background:#5a5a5a;border-right:1px solid #4e4e4e;border-bottom:1px solid #4e4e4e;"></div>
<svg style="left:773px;top:449.7px" width="30" height="37"><circle cx="14.500" cy="15.2" r="5.75" fill="#f2f2f2" opacity="1"/></svg>
<div class="t" style="left:783.2732421875px;top:476.40px;line-height:12px;font-size:7.6px;color:#f4f4f4;white-space:nowrap;font-kerning:none;">15</div>
<div style="left:803px;top:449.7px;width:30px;height:37.2px;background:#5a5a5a;border-right:1px solid #4e4e4e;border-bottom:1px solid #4e4e4e;"></div>
<svg style="left:803px;top:449.7px" width="30" height="37"><circle cx="14.500" cy="15.2" r="7.75" fill="#f2f2f2" opacity="1"/></svg>
<div class="t" style="left:813.2732421875px;top:476.40px;line-height:12px;font-size:7.6px;color:#f4f4f4;white-space:nowrap;font-kerning:none;">20</div>
<div style="left:833px;top:449.7px;width:30px;height:37.2px;background:#5a5a5a;border-right:1px solid #4e4e4e;border-bottom:1px solid #4e4e4e;"></div>
<svg style="left:833px;top:449.7px" width="30" height="37"><circle cx="14.500" cy="15.2" r="9.25" fill="#f2f2f2" opacity="1"/></svg>
<div class="t" style="left:843.2732421875px;top:476.40px;line-height:12px;font-size:7.6px;color:#f4f4f4;white-space:nowrap;font-kerning:none;">25</div>
<div style="left:863px;top:449.7px;width:30px;height:37.2px;background:#5a5a5a;border-right:1px solid #4e4e4e;border-bottom:1px solid #4e4e4e;"></div>
<svg style="left:863px;top:449.7px" width="30" height="37"><circle cx="14.500" cy="15.2" r="9.25" fill="#f2f2f2" opacity="1"/></svg>
<div class="t" style="left:873.2732421875px;top:476.40px;line-height:12px;font-size:7.6px;color:#f4f4f4;white-space:nowrap;font-kerning:none;">30</div>
<div style="left:893px;top:449.7px;width:30px;height:37.2px;background:#5a5a5a;border-right:1px solid #4e4e4e;border-bottom:1px solid #4e4e4e;"></div>
<svg style="left:893px;top:449.7px" width="30" height="37"><circle cx="14.500" cy="15.2" r="9.25" fill="#f2f2f2" opacity="1"/></svg>
<div class="t" style="left:903.2732421875px;top:476.40px;line-height:12px;font-size:7.6px;color:#f4f4f4;white-space:nowrap;font-kerning:none;">40</div>
<div style="left:923px;top:449.7px;width:30px;height:37.2px;background:#5a5a5a;border-right:1px solid #4e4e4e;border-bottom:1px solid #4e4e4e;"></div>
<svg style="left:923px;top:449.7px" width="30" height="37"><circle cx="14.500" cy="15.2" r="9.25" fill="#f2f2f2" opacity="1"/></svg>
<div class="t" style="left:933.2732421875px;top:476.40px;line-height:12px;font-size:7.6px;color:#f4f4f4;white-space:nowrap;font-kerning:none;">50</div>
<div style="left:953px;top:449.7px;width:30px;height:37.2px;background:#5a5a5a;border-right:1px solid #4e4e4e;border-bottom:1px solid #4e4e4e;"></div>
<svg style="left:953px;top:449.7px" width="30" height="37"><circle cx="14.500" cy="15.2" r="9.25" fill="#f2f2f2" opacity="1"/></svg>
<div class="t" style="left:963.2732421875px;top:476.40px;line-height:12px;font-size:7.6px;color:#f4f4f4;white-space:nowrap;font-kerning:none;">70</div>
<div style="left:743px;top:486.9px;width:30px;height:37.2px;background:#5a5a5a;border-right:1px solid #4e4e4e;border-bottom:1px solid #4e4e4e;"></div>
<svg style="left:743px;top:486.9px" width="30" height="37"><circle cx="14.500" cy="15.2" r="9.25" fill="#f2f2f2" opacity="1"/></svg>
<div class="t" style="left:751.15986328125px;top:513.60px;line-height:12px;font-size:7.6px;color:#f4f4f4;white-space:nowrap;font-kerning:none;">100</div>
<div style="left:773px;top:486.9px;width:30px;height:37.2px;background:#5a5a5a;border-right:1px solid #4e4e4e;border-bottom:1px solid #4e4e4e;"></div>
<svg style="left:773px;top:486.9px" width="30" height="37"><circle cx="14.500" cy="15.2" r="9.25" fill="#f2f2f2" opacity="1"/></svg>
<div class="t" style="left:781.15986328125px;top:513.60px;line-height:12px;font-size:7.6px;color:#f4f4f4;white-space:nowrap;font-kerning:none;">150</div>
<div style="left:803px;top:486.9px;width:30px;height:37.2px;background:#5a5a5a;border-right:1px solid #4e4e4e;border-bottom:1px solid #4e4e4e;"></div>
<svg style="left:803px;top:486.9px" width="30" height="37"><circle cx="14.500" cy="15.2" r="9.25" fill="#f2f2f2" opacity="1"/></svg>
<div class="t" style="left:811.15986328125px;top:513.60px;line-height:12px;font-size:7.6px;color:#f4f4f4;white-space:nowrap;font-kerning:none;">200</div>
<div style="left:833px;top:486.9px;width:30px;height:37.2px;background:#5a5a5a;border-right:1px solid #4e4e4e;border-bottom:1px solid #4e4e4e;"></div>
<svg style="left:833px;top:486.9px" width="30" height="37"><circle cx="14.500" cy="15.2" r="9.25" fill="#f2f2f2" opacity="1"/></svg>
<div class="t" style="left:841.15986328125px;top:513.60px;line-height:12px;font-size:7.6px;color:#f4f4f4;white-space:nowrap;font-kerning:none;">300</div>
<div style="left:863px;top:486.9px;width:30px;height:37.2px;background:#5a5a5a;border-right:1px solid #4e4e4e;border-bottom:1px solid #4e4e4e;"></div>
<svg style="left:863px;top:486.9px" width="30" height="37"><circle cx="14.500" cy="15.2" r="9.25" fill="#f2f2f2" opacity="1"/></svg>
<div class="t" style="left:871.15986328125px;top:513.60px;line-height:12px;font-size:7.6px;color:#f4f4f4;white-space:nowrap;font-kerning:none;">400</div>
<div style="left:893px;top:486.9px;width:30px;height:37.2px;background:#5a5a5a;border-right:1px solid #4e4e4e;border-bottom:1px solid #4e4e4e;"></div>
<svg style="left:893px;top:486.9px" width="30" height="37"><circle cx="14.500" cy="15.2" r="9.25" fill="#f2f2f2" opacity="1"/></svg>
<div class="t" style="left:901.15986328125px;top:513.60px;line-height:12px;font-size:7.6px;color:#f4f4f4;white-space:nowrap;font-kerning:none;">500</div>
<div style="left:923px;top:486.9px;width:30px;height:37.2px;background:#5a5a5a;border-right:1px solid #4e4e4e;border-bottom:1px solid #4e4e4e;"></div>
<svg style="left:923px;top:486.9px" width="30" height="37"><circle cx="14.500" cy="15.2" r="9.25" fill="#f2f2f2" opacity="1"/></svg>
<div class="t" style="left:931.15986328125px;top:513.60px;line-height:12px;font-size:7.6px;color:#f4f4f4;white-space:nowrap;font-kerning:none;">700</div>
<div style="left:953px;top:486.9px;width:30px;height:37.2px;background:#5a5a5a;border-right:1px solid #4e4e4e;border-bottom:1px solid #4e4e4e;"></div>
<svg style="left:953px;top:486.9px" width="30" height="37"><circle cx="14.500" cy="15.2" r="9.25" fill="#f2f2f2" opacity="1"/></svg>
<div class="t" style="left:959.046484375px;top:513.60px;line-height:12px;font-size:7.6px;color:#f4f4f4;white-space:nowrap;font-kerning:none;">1000</div>
<div style="left:1007.5px;top:412.5px;width:15px;height:118px;background:linear-gradient(90deg,#3a3a3a,#2a2a2a);"></div>
<svg style="left:1007.5px;top:412.5px" width="15" height="118"><path d="M4.0 6.2h7l-3.500 -5z" fill="#a8a8a8"/><path d="M4.0 111.8h7l-3.500 5z" fill="#a8a8a8"/></svg>
<div style="left:1008.0px;top:421px;width:13.5px;height:99px;background:#747474;border-radius:4px;"></div>
<div style="left:0px;top:531px;width:1024px;height:15px;background:#252525;"></div>
<div class="t" style="left:4.7px;top:533.00px;line-height:12px;font-size:8.3px;color:#d4d4d4;white-space:nowrap;font-kerning:none;letter-spacing:0.038px;">2600 * 2200 pixel</div>
<div class="t" style="left:76px;top:533.00px;line-height:12px;font-size:8.3px;color:#d4d4d4;white-space:nowrap;font-kerning:none;letter-spacing:0.150px;">(11 * 9.3cm)</div>
<div class="t" style="left:130px;top:533.00px;line-height:12px;font-size:8.3px;color:#d4d4d4;white-space:nowrap;font-kerning:none;letter-spacing:0.110px;">600 dpi</div>
<div class="t" style="left:166px;top:533.00px;line-height:12px;font-size:8.3px;color:#d4d4d4;white-space:nowrap;font-kerning:none;letter-spacing:-0.330px;">25 %</div>
<div class="t" style="left:191.4px;top:533.00px;line-height:12px;font-size:8.3px;color:#d4d4d4;white-space:nowrap;font-kerning:none;letter-spacing:-0.120px;">( 1934, 1874 )</div>
<div class="t" style="left:249px;top:533.00px;line-height:12px;font-size:8.3px;color:#d4d4d4;white-space:nowrap;font-kerning:none;letter-spacing:0.268px;">Vẽ một đường thẳng bằng cách giữ phím Shift, Thay đổi cỡ cọ bằng cách giữ phím Ctrl, Alt và kéo</div>
<div style="left:0px;top:545.5px;width:1024px;height:30.5px;background:linear-gradient(90deg,#ededeb 0%,#efecec 18%,#f1e5ea 36%,#eedde8 60%,#f0e4e5 80%,#f1ede5 100%);"></div>
<div style="left:147px;top:545.5px;width:37.5px;height:30.5px;background:rgba(255,255,255,0.55);"></div>
<div style="left:115px;top:574px;width:30px;height:2px;background:#3b9ab8;"></div>
<div style="left:148px;top:574px;width:36px;height:2px;background:#3b9ab8;"></div>
<svg style="left:12px;top:555px" width="12" height="12" viewBox="0 0 12 12"><path d="M0 1.700L5.300 1V5.700H0zM6.100 .9L12.500 0V5.700H6.100zM0 6.500H5.300V11.200L0 10.500zM6.100 6.500H12.500V12.200L6.100 11.300z" fill="#111" /></svg>
<svg style="left:47px;top:552px" width="18" height="18" viewBox="0 0 18 18"><defs><linearGradient id="eg1" x1="0" y1="0" x2="1" y2="0.300"><stop offset="0" stop-color="#2a8fd8"/><stop offset=".55" stop-color="#38c0a0"/><stop offset="1" stop-color="#5cd068"/></linearGradient><linearGradient id="eg2" x1="0" y1="0" x2="0.600" y2="1"><stop offset="0" stop-color="#2482d2"/><stop offset="1" stop-color="#0f58aa"/></linearGradient></defs><circle cx="9" cy="9" r="8.800" fill="url(#eg2)"/><path d="M.4 8A8.700 8.700 0 0 1 17.800 8.800C17.800 11.200 16 12.600 13.800 12.600 12 12.600 10.800 11.800 10.800 10.800 10.800 10 11.500 9.600 11.500 8.600 11.500 7.200 10.300 6 8.300 6 4.800 6 2 7 .4 8z" fill="url(#eg1)"/><path d="M10.800 7.400C9.200 7.600 8 9 8.200 10.800 8.500 12.800 10.500 14.300 13 14.300 14.800 14.300 16.300 13.600 17.200 12.300 16.300 12.700 15 12.800 13.800 12.600 12 12.600 10.800 11.800 10.800 10.800 10.800 10 11.500 9.600 11.500 8.600 11.500 8.200 11.200 7.700 10.800 7.400z" fill="#f0eef0"/></svg>
<svg style="left:83px;top:553px" width="18" height="16" viewBox="0 0 18 16"><path d="M1 2h6l1.500 1.800H17V13H1z" fill="#e8a825" /><path d="M1 4.800h16V14H1z" fill="#fbd35c" /><path d="M5 8.500h8V14H5z" fill="#3c8be0" /><path d="M7.300 11h3.400v3H7.300z" fill="#fbd35c" /><path d="M1 13.200h16V14H1z" fill="#d89a20" /></svg>
<svg style="left:121px;top:552px" width="17" height="17" viewBox="0 0 17 17"><circle cx="8" cy="9" r="7.500" fill="#7cbf3f"/><circle cx="8" cy="9" r="4.300" fill="#f4f8ee"/><circle cx="8" cy="9" r="2.300" fill="#5aa52a"/><path d="M8 9L12.500 0h4.500v4z" fill="#f0eeee" /><path d="M10.500 6.500L13.500 1.500M11.800 7.500L16 4" fill="none" stroke="#e23b2e" stroke-width="1.3" stroke-linecap="round" stroke-linejoin="round" /></svg>
<svg style="left:158px;top:552px" width="17" height="17" viewBox="0 0 17 17"><defs><radialGradient id="mgl" cx=".5" cy=".5" r=".5"><stop offset=".6" stop-color="#fff" stop-opacity=".9"/><stop offset="1" stop-color="#fff" stop-opacity="0"/></radialGradient><linearGradient id="mg" x1="0" y1="0" x2="1" y2="0"><stop offset="0" stop-color="#1878d8"/><stop offset=".5" stop-color="#16a0a0"/><stop offset="1" stop-color="#2cb860"/></linearGradient></defs><circle cx="8.500" cy="8.500" r="9.500" fill="url(#mgl)"/><path d="M10 1.500C12.800 4.300 14.300 6.800 14.300 9.500A5.800 5.800 0 0 1 2.700 9.500C2.700 7 4.300 5.200 5.800 4 6.300 5.500 7 6.300 8 6.500 8.200 4.500 8.800 3 10 1.500z" fill="url(#mg)"/><path d="M10 1.500C8.800 3 8.200 4.500 8 6.500 7 6.300 6.300 5.500 5.800 4 4.300 5.200 3 6.800 2.800 8.800 5.500 9.200 8.800 8.300 11.500 3.300 11 2.600 10.500 2 10 1.500z" fill="#ee4030"/><path d="M11.800 5.500c.9 1.400 1.300 2.600 1.300 3.800" fill="none" stroke="#fff" stroke-opacity=".55" stroke-width="1.100" stroke-linecap="round"/></svg>
<svg class="g" style="left:785px;top:546px" width="239" height="30" viewBox="0 0 239 30"><path d="M6.500 16.500L10.500 12.500 14.500 16.500" fill="none" stroke="#1a1a1a" stroke-width="1.2" stroke-linecap="round" stroke-linejoin="round" /><path d="M31.500 12.500h8.500v5.500h-8.500z" fill="none" stroke="#1a1a1a" stroke-width="1.1" stroke-linecap="round" stroke-linejoin="round" /><path d="M28 11h3v2.500h-3z" fill="#1a1a1a" /><path d="M29.500 13.500v2.500h2" fill="none" stroke="#1a1a1a" stroke-width="1" stroke-linecap="round" stroke-linejoin="round" /><path d="M60.2 18.3A3.5 3.5 0 0 1 62.9 16.1" fill="none" stroke="#1a1a1a" stroke-width="1"/><path d="M57.9 17.5A6 6 0 0 1 62.5 13.6" fill="none" stroke="#1a1a1a" stroke-width="1"/><path d="M55.5 16.6A8.5 8.5 0 0 1 62.1 11.2" fill="none" stroke="#1a1a1a" stroke-width="1"/><circle cx="62.800" cy="18.800" r="1" fill="#1a1a1a"/><path d="M76.500 13.500h2l3 -3v10l-3 -3h-2z" fill="none" stroke="#1a1a1a" stroke-width="1.1" stroke-linecap="round" stroke-linejoin="round" /><path d="M83.500 12.500a4 4 0 0 1 0 6" fill="none" stroke="#666" stroke-width="1"/><path d="M85.300 11a6 6 0 0 1 0 9" fill="none" stroke="#aaa" stroke-width=".9"/><path d="M104 20c2 -1 4 -4 5.500 -7.500 .8 -2 2.800 -2 2.500 -.3 -.4 2 -3 4.500 -6 5.500M104.500 18.500a1.800 1.800 0 1 1 -.1 0M109 17c1.500 .5 3.500 -.5 5 -2" fill="none" stroke="#1a1a1a" stroke-width="1.1" stroke-linecap="round" stroke-linejoin="round" /><path d="M208 9.500h12v8.500h-7l-2.500 2.500v-2.500H208z" fill="#1a1a1a" /><path d="M210 12h8M210 14h8M210 16h5" fill="none" stroke="#d8d4d4" stroke-width="0.5" stroke-linecap="round" stroke-linejoin="round" /><circle cx="219.500" cy="20" r="4.300" fill="#e8e4e2" stroke="#8a8a8a" stroke-width=".7"/><text x="219.500" y="22.800" text-anchor="middle" font-family="Liberation Sans,sans-serif" font-size="7.500" fill="#111">9</text></svg>
<div class="t" style="left:913.7px;top:555.00px;line-height:12px;font-size:8.3px;color:#222;white-space:nowrap;font-kerning:none;letter-spacing:-0.362px;">ENG</div>
<div class="t" style="left:942px;top:547.70px;line-height:12px;font-size:8.3px;color:#222;white-space:nowrap;font-kerning:none;letter-spacing:0.059px;">10:06 AM</div>
<div class="t" style="left:943.5px;top:561.00px;line-height:12px;font-size:8.3px;color:#222;white-space:nowrap;font-kerning:none;letter-spacing:0.149px;">8/3/2021</div>
</body></html>
